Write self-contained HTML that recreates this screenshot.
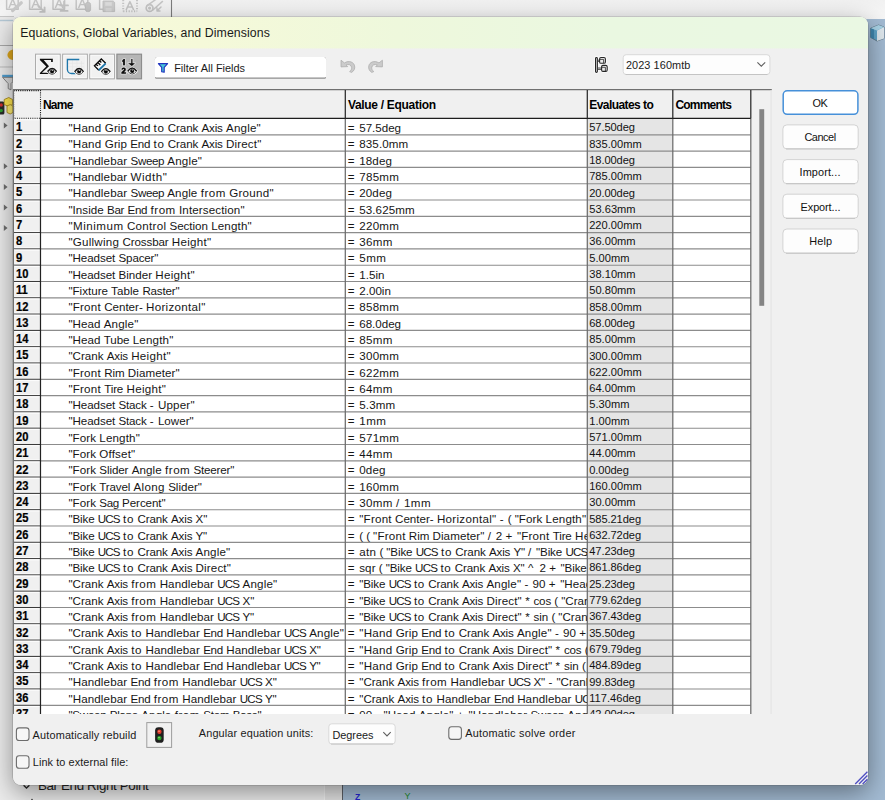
<!DOCTYPE html>
<html><head><meta charset="utf-8"><title>Equations, Global Variables, and Dimensions</title>
<style>
*{box-sizing:border-box;margin:0;padding:0}
html,body{width:885px;height:800px;overflow:hidden;background:#e6e6e6}
body{position:relative;font-family:"Liberation Sans",sans-serif;font-size:12px;color:#161616}
.abs{position:absolute}
i{font-style:normal}
.t{position:absolute;white-space:nowrap;color:#161616}
.clip{position:absolute;overflow:hidden}
/* ---------- backdrop (application window behind the dialog) ---------- */
#top{left:0;top:0;width:885px;height:19px;background:linear-gradient(#f1f1f1 0,#f5f5f5 10px,#f7f7f7 19px)}
#lpanel{left:0;top:17px;width:342px;height:783px;background:#ececec}
#lscroll{left:324px;top:700px;width:18px;height:100px;background:#e3e3e3;border-left:1px solid #f4f4f4}
#view{left:342px;top:19px;width:543px;height:781px;background:#a3bbd3;border-left:1px solid #5b5f66}
/* ---------- dialog ---------- */
#dlg{left:13px;top:17px;width:855px;height:768px;background:#f0f0f0;border-radius:8px;overflow:hidden}
#shadow{left:13px;top:17px;width:855px;height:768px;border-radius:8px;box-shadow:0 7px 26px rgba(0,0,0,.42),0 0 0 .6px rgba(100,100,100,.35)}
#title{left:0;top:0;width:855px;height:32px;background:linear-gradient(rgba(240,240,240,0) 0,rgba(240,240,240,0) 31px,rgba(240,240,240,.55) 31px),linear-gradient(90deg,#f8fad9 0,#f5f9d9 22%,#eef8dc 45%,#eaf8e1 70%,#eaf8e3 100%)}
#filter{left:155px;top:57px;width:171px;height:21.6px;background:#fff;border-radius:2.5px;box-shadow:0 1.2px 0 #8f8f8f}
.combo{position:absolute;background:#fdfdfd;border:1px solid #d9d9d9;border-bottom-color:#c6c6c6;border-radius:3px}
.btn{position:absolute;left:782.6px;width:75.8px;height:24.7px;background:#fdfdfd;border:1px solid #d4d4d4;border-bottom-color:#c8c8c8;border-radius:4.5px}
.btn.ok{border:1.6px solid #4791da;background:#fff}
.cb{position:absolute;width:13.4px;height:13.4px;border:1.1px solid #6e6e6e;border-radius:3px;background:#f5f5f5}
#tbclip{left:13px;top:89px;width:759px;height:625px;overflow:hidden}
#tbin{left:-13px;top:-89px;width:885px;height:800px}
</style></head><body>

<div id="top" class="abs"></div>
<div id="lpanel" class="abs"></div><div id="lscroll" class="abs"></div>
<div id="view" class="abs"></div>

<!-- backdrop details -->
<svg class="abs" style="left:0;top:0" width="885" height="800" viewBox="0 0 885 800">
  <!-- faint disabled toolbar icons at the top -->
  <g fill="none" stroke="#c6c6c6" stroke-width="1.45" stroke-linejoin="round" stroke-linecap="round">
    <path d="M6.6 -1V9.2H18.2V-1M29.6 -1V9.2H41.2V-1M53 -1V9.2H64.6V-1M76.2 -1V9.2H87.8V-1M99.6 -1V9.2H103"/>
    <path d="M9.2 7.6L12.7 -1L16.2 7.6M10.6 4.6H14.799999999999999M32.2 7.6L35.7 -1L39.2 7.6M33.6 4.6H37.8M55.6 7.6L59.1 -1L62.6 7.6M57 4.6H61.2M78.8 7.6L82.3 -1L85.8 7.6M80.2 4.6H84.4M126.3 9.6L129.9 1.6L133.5 9.6M127.6 7H132.2"/>
    <path d="M21.3 2.8L12.6 10.6" stroke-width="3.2" stroke="#cbcbcb"/>
    <path d="M38.2 5.8L43.6 11M44.6 7.4V11.9H40.2"  stroke-width="1.9"/>
    <path d="M60.2 5.4H68M64.1 1.6V9.2M60.6 10.9H67.6" stroke-width="1.9"/>
    <path d="M123.2 0V11.2M137 0V11.2M123.2 11.2H137" stroke-dasharray="1.2 1.5" stroke-width="2" stroke-linecap="butt"/>
    <circle cx="149.6" cy="8" r="3.4" stroke-width="1.7"/><circle cx="149.6" cy="8" r=".9" fill="#c6c6c6"/>
    <path d="M147 5.6L156.5 -1M152.6 10.2L162.5 1.4M161 7L157.2 10.8M157 8V11H160"/>
  </g>
  <rect x="85.4" y="2.4" width="5.2" height="9.2" rx="2.2" fill="#c8c8c8" stroke="#bdbdbd" stroke-width=".8"/>
  <path d="M103 1H113.2L114.6 2.4V11.6H103Z" fill="#cdcdcd" stroke="#bfbfbf" stroke-width=".9"/>
  <rect x="105.2" y="2.2" width="6.6" height="3.6" fill="#dedede"/><rect x="105.6" y="8" width="6" height="3.4" fill="#d9d9d9"/>
  <line x1="171.5" y1="0" x2="171.5" y2="17" stroke="#7d7d7d" stroke-width="1.1"/>
  <line x1="0" y1="16.5" x2="14" y2="16.5" stroke="#c9c9c9" stroke-width="1"/>
  <!-- left strip -->
  <line x1="0" y1="20.5" x2="13" y2="20.5" stroke="#b5c9d6" stroke-width="1.4"/>
  <line x1="0" y1="45.5" x2="13" y2="45.5" stroke="#a9a9a9" stroke-width="1"/>
  <line x1="0" y1="67" x2="13" y2="67" stroke="#bdbdbd" stroke-width="1"/>
  <path d="M13 49.5C9.5 50 7.5 52.5 7.4 55C7.5 57.5 9.5 59.6 13 60Z" fill="#e0a81c"/>
  <path d="M2.2 74.8H13V77H2.2Z" fill="#4f9ed0"/><path d="M2.6 77.4L8.2 83.6V88.6L11 89.8V83.6L13 81.5V77.4Z" fill="#d9d9d9" stroke="#7a7a7a" stroke-width=".9"/>
  <rect x="-1" y="101.5" width="5.4" height="13" rx="1.6" fill="#2a2a2a"/><circle cx="1.2" cy="105" r="1.7" fill="#d03030"/><circle cx="1.2" cy="110.6" r="1.7" fill="#30a030"/>
  <path d="M4.2 99.5L8.8 97.5L12.6 99.5V104.5L8.8 106.5L4.2 104.5Z" fill="#ffe650" stroke="#a08014" stroke-width=".8"/>
  <path d="M7 106L10.2 104.6L13 106V112.5L10.2 114L7 112.5Z" fill="#ffee70" stroke="#a08014" stroke-width=".8"/>
  <g fill="#6f6f6f"><path d="M3.8 122.6L7.6 125.6L3.8 128.6Z"/><path d="M3.8 163.3L7.6 166.3L3.8 169.3Z"/><path d="M3.8 184L7.6 187L3.8 190Z"/><path d="M3.8 204.5L7.6 207.5L3.8 210.5Z"/><path d="M3.8 225L7.6 228L3.8 231Z"/></g>
  <!-- right strip cube -->
  <path d="M870.6 28.2L878.5 25L884 27V38.5L877 41L870.6 37.4Z" fill="#5fa3c6" stroke="#5d6e7c" stroke-width=".8"/>
  <path d="M877 30.5L884 27V38.5L877 41Z" fill="#dfe8ee"/><path d="M870.6 28.2L878.5 25L884 27L877 30.5Z" fill="#a9d3e6"/>
  <path d="M870.6 28.2L874 29.6V39.3L870.6 37.4Z" fill="#3f86ad"/>
  <!-- bottom: tree text peeking out + axis labels -->
  <path d="M23.6 785.2L26.5 788L29.4 785.2" fill="none" stroke="#2a2a2a" stroke-width="1.5"/>
  <path d="M31.2 800L32 798.9L32.8 800" fill="none" stroke="#555" stroke-width=".9"/>
</svg>
<span class="t" style="left:38px;top:776.6px;font-size:13.4px;line-height:18px;letter-spacing:-.38px;color:#1c1c1c">Bar End Right Point</span>
<span class="t" style="left:355px;top:791.8px;font-size:8.6px;line-height:11px;font-weight:bold;color:#2424d0">Z</span>
<span class="t" style="left:404.6px;top:789.6px;font-size:9px;line-height:12px;color:#1f8b2e">Y</span>

<!-- dialog -->
<div id="shadow" class="abs"></div>
<div id="dlg" class="abs">
  <div id="title" class="abs"></div>
</div>

<svg class="abs" style="left:0;top:0" width="885" height="800" viewBox="0 0 885 800">
  <!-- filter field -->
  <path d="M155 59.2Q155 57.1 157.1 57.1H323.9Q326 57.1 326 59.2V77.4Q326 78.7 324.6 78.7H156.4Q155 78.7 155 77.4Z" fill="#8d8d8d"/>
  <path d="M155 59.2Q155 57.1 157.1 57.1H323.9Q326 57.1 326 59.2V76.3Q326 77.5 324.6 77.5H156.4Q155 77.5 155 76.3Z" fill="#fff"/>
  <!-- combo boxes -->
  <rect x="623.2" y="54.7" width="146.7" height="19.8" rx="3" fill="#fdfdfd" stroke="#d9d9d9" stroke-width="1"/>
  <path d="M625.5 74.5H767.5" stroke="#c4c4c4" stroke-width="1"/>
  <rect x="328.8" y="723.8" width="66.4" height="20.2" rx="3" fill="#fdfdfd" stroke="#d9d9d9" stroke-width="1"/>
  <path d="M331 744H393" stroke="#c4c4c4" stroke-width="1"/>
</svg>

<!-- table -->
<div id="tbclip" class="abs"><div id="tbin" class="abs">
<svg class="abs" style="left:0;top:0" width="885" height="800" viewBox="0 0 885 800"><rect x="13" y="89" width="737.8" height="29.5" fill="#f0f0f0"/>
<rect x="13" y="118.5" width="27.5" height="595.5" fill="#f0f0f0"/>
<rect x="40.5" y="118.5" width="710.3" height="595.5" fill="#fff"/>
<rect x="587.3" y="118.5" width="85.5" height="595.5" fill="#e5e5e5"/>
<rect x="14.2" y="119.10" width="25.7" height="1.2" fill="#fcfcfc"/>
<rect x="14.2" y="133.20" width="25.7" height="1" fill="#f9f9f9"/>
<rect x="14.1" y="119.10" width="1" height="15.10" fill="#fafafa"/>
<line x1="13" x2="40.5" y1="134.80" y2="134.80" stroke="#3a3a3a" stroke-width="1.1"/>
<line x1="40.5" x2="750.8" y1="134.80" y2="134.80" stroke="#8c8c8c" stroke-width="1.15"/>
<rect x="14.2" y="135.40" width="25.7" height="1.2" fill="#fcfcfc"/>
<rect x="14.2" y="149.50" width="25.7" height="1" fill="#f9f9f9"/>
<rect x="14.1" y="135.40" width="1" height="15.10" fill="#fafafa"/>
<line x1="13" x2="40.5" y1="151.10" y2="151.10" stroke="#3a3a3a" stroke-width="1.1"/>
<line x1="40.5" x2="750.8" y1="151.10" y2="151.10" stroke="#8c8c8c" stroke-width="1.15"/>
<rect x="14.2" y="151.70" width="25.7" height="1.2" fill="#fcfcfc"/>
<rect x="14.2" y="165.80" width="25.7" height="1" fill="#f9f9f9"/>
<rect x="14.1" y="151.70" width="1" height="15.10" fill="#fafafa"/>
<line x1="13" x2="40.5" y1="167.40" y2="167.40" stroke="#3a3a3a" stroke-width="1.1"/>
<line x1="40.5" x2="750.8" y1="167.40" y2="167.40" stroke="#8c8c8c" stroke-width="1.15"/>
<rect x="14.2" y="168.00" width="25.7" height="1.2" fill="#fcfcfc"/>
<rect x="14.2" y="182.10" width="25.7" height="1" fill="#f9f9f9"/>
<rect x="14.1" y="168.00" width="1" height="15.10" fill="#fafafa"/>
<line x1="13" x2="40.5" y1="183.70" y2="183.70" stroke="#3a3a3a" stroke-width="1.1"/>
<line x1="40.5" x2="750.8" y1="183.70" y2="183.70" stroke="#8c8c8c" stroke-width="1.15"/>
<rect x="14.2" y="184.30" width="25.7" height="1.2" fill="#fcfcfc"/>
<rect x="14.2" y="198.40" width="25.7" height="1" fill="#f9f9f9"/>
<rect x="14.1" y="184.30" width="1" height="15.10" fill="#fafafa"/>
<line x1="13" x2="40.5" y1="200.00" y2="200.00" stroke="#3a3a3a" stroke-width="1.1"/>
<line x1="40.5" x2="750.8" y1="200.00" y2="200.00" stroke="#8c8c8c" stroke-width="1.15"/>
<rect x="14.2" y="200.60" width="25.7" height="1.2" fill="#fcfcfc"/>
<rect x="14.2" y="214.70" width="25.7" height="1" fill="#f9f9f9"/>
<rect x="14.1" y="200.60" width="1" height="15.10" fill="#fafafa"/>
<line x1="13" x2="40.5" y1="216.30" y2="216.30" stroke="#3a3a3a" stroke-width="1.1"/>
<line x1="40.5" x2="750.8" y1="216.30" y2="216.30" stroke="#8c8c8c" stroke-width="1.15"/>
<rect x="14.2" y="216.90" width="25.7" height="1.2" fill="#fcfcfc"/>
<rect x="14.2" y="231.00" width="25.7" height="1" fill="#f9f9f9"/>
<rect x="14.1" y="216.90" width="1" height="15.10" fill="#fafafa"/>
<line x1="13" x2="40.5" y1="232.60" y2="232.60" stroke="#3a3a3a" stroke-width="1.1"/>
<line x1="40.5" x2="750.8" y1="232.60" y2="232.60" stroke="#8c8c8c" stroke-width="1.15"/>
<rect x="14.2" y="233.20" width="25.7" height="1.2" fill="#fcfcfc"/>
<rect x="14.2" y="247.30" width="25.7" height="1" fill="#f9f9f9"/>
<rect x="14.1" y="233.20" width="1" height="15.10" fill="#fafafa"/>
<line x1="13" x2="40.5" y1="248.90" y2="248.90" stroke="#3a3a3a" stroke-width="1.1"/>
<line x1="40.5" x2="750.8" y1="248.90" y2="248.90" stroke="#8c8c8c" stroke-width="1.15"/>
<rect x="14.2" y="249.50" width="25.7" height="1.2" fill="#fcfcfc"/>
<rect x="14.2" y="263.60" width="25.7" height="1" fill="#f9f9f9"/>
<rect x="14.1" y="249.50" width="1" height="15.10" fill="#fafafa"/>
<line x1="13" x2="40.5" y1="265.20" y2="265.20" stroke="#3a3a3a" stroke-width="1.1"/>
<line x1="40.5" x2="750.8" y1="265.20" y2="265.20" stroke="#8c8c8c" stroke-width="1.15"/>
<rect x="14.2" y="265.80" width="25.7" height="1.2" fill="#fcfcfc"/>
<rect x="14.2" y="279.90" width="25.7" height="1" fill="#f9f9f9"/>
<rect x="14.1" y="265.80" width="1" height="15.10" fill="#fafafa"/>
<line x1="13" x2="40.5" y1="281.50" y2="281.50" stroke="#3a3a3a" stroke-width="1.1"/>
<line x1="40.5" x2="750.8" y1="281.50" y2="281.50" stroke="#8c8c8c" stroke-width="1.15"/>
<rect x="14.2" y="282.10" width="25.7" height="1.2" fill="#fcfcfc"/>
<rect x="14.2" y="296.20" width="25.7" height="1" fill="#f9f9f9"/>
<rect x="14.1" y="282.10" width="1" height="15.10" fill="#fafafa"/>
<line x1="13" x2="40.5" y1="297.80" y2="297.80" stroke="#3a3a3a" stroke-width="1.1"/>
<line x1="40.5" x2="750.8" y1="297.80" y2="297.80" stroke="#8c8c8c" stroke-width="1.15"/>
<rect x="14.2" y="298.40" width="25.7" height="1.2" fill="#fcfcfc"/>
<rect x="14.2" y="312.50" width="25.7" height="1" fill="#f9f9f9"/>
<rect x="14.1" y="298.40" width="1" height="15.10" fill="#fafafa"/>
<line x1="13" x2="40.5" y1="314.10" y2="314.10" stroke="#3a3a3a" stroke-width="1.1"/>
<line x1="40.5" x2="750.8" y1="314.10" y2="314.10" stroke="#8c8c8c" stroke-width="1.15"/>
<rect x="14.2" y="314.70" width="25.7" height="1.2" fill="#fcfcfc"/>
<rect x="14.2" y="328.80" width="25.7" height="1" fill="#f9f9f9"/>
<rect x="14.1" y="314.70" width="1" height="15.10" fill="#fafafa"/>
<line x1="13" x2="40.5" y1="330.40" y2="330.40" stroke="#3a3a3a" stroke-width="1.1"/>
<line x1="40.5" x2="750.8" y1="330.40" y2="330.40" stroke="#8c8c8c" stroke-width="1.15"/>
<rect x="14.2" y="331.00" width="25.7" height="1.2" fill="#fcfcfc"/>
<rect x="14.2" y="345.10" width="25.7" height="1" fill="#f9f9f9"/>
<rect x="14.1" y="331.00" width="1" height="15.10" fill="#fafafa"/>
<line x1="13" x2="40.5" y1="346.70" y2="346.70" stroke="#3a3a3a" stroke-width="1.1"/>
<line x1="40.5" x2="750.8" y1="346.70" y2="346.70" stroke="#8c8c8c" stroke-width="1.15"/>
<rect x="14.2" y="347.30" width="25.7" height="1.2" fill="#fcfcfc"/>
<rect x="14.2" y="361.40" width="25.7" height="1" fill="#f9f9f9"/>
<rect x="14.1" y="347.30" width="1" height="15.10" fill="#fafafa"/>
<line x1="13" x2="40.5" y1="363.00" y2="363.00" stroke="#3a3a3a" stroke-width="1.1"/>
<line x1="40.5" x2="750.8" y1="363.00" y2="363.00" stroke="#8c8c8c" stroke-width="1.15"/>
<rect x="14.2" y="363.60" width="25.7" height="1.2" fill="#fcfcfc"/>
<rect x="14.2" y="377.70" width="25.7" height="1" fill="#f9f9f9"/>
<rect x="14.1" y="363.60" width="1" height="15.10" fill="#fafafa"/>
<line x1="13" x2="40.5" y1="379.30" y2="379.30" stroke="#3a3a3a" stroke-width="1.1"/>
<line x1="40.5" x2="750.8" y1="379.30" y2="379.30" stroke="#8c8c8c" stroke-width="1.15"/>
<rect x="14.2" y="379.90" width="25.7" height="1.2" fill="#fcfcfc"/>
<rect x="14.2" y="394.00" width="25.7" height="1" fill="#f9f9f9"/>
<rect x="14.1" y="379.90" width="1" height="15.10" fill="#fafafa"/>
<line x1="13" x2="40.5" y1="395.60" y2="395.60" stroke="#3a3a3a" stroke-width="1.1"/>
<line x1="40.5" x2="750.8" y1="395.60" y2="395.60" stroke="#8c8c8c" stroke-width="1.15"/>
<rect x="14.2" y="396.20" width="25.7" height="1.2" fill="#fcfcfc"/>
<rect x="14.2" y="410.30" width="25.7" height="1" fill="#f9f9f9"/>
<rect x="14.1" y="396.20" width="1" height="15.10" fill="#fafafa"/>
<line x1="13" x2="40.5" y1="411.90" y2="411.90" stroke="#3a3a3a" stroke-width="1.1"/>
<line x1="40.5" x2="750.8" y1="411.90" y2="411.90" stroke="#8c8c8c" stroke-width="1.15"/>
<rect x="14.2" y="412.50" width="25.7" height="1.2" fill="#fcfcfc"/>
<rect x="14.2" y="426.60" width="25.7" height="1" fill="#f9f9f9"/>
<rect x="14.1" y="412.50" width="1" height="15.10" fill="#fafafa"/>
<line x1="13" x2="40.5" y1="428.20" y2="428.20" stroke="#3a3a3a" stroke-width="1.1"/>
<line x1="40.5" x2="750.8" y1="428.20" y2="428.20" stroke="#8c8c8c" stroke-width="1.15"/>
<rect x="14.2" y="428.80" width="25.7" height="1.2" fill="#fcfcfc"/>
<rect x="14.2" y="442.90" width="25.7" height="1" fill="#f9f9f9"/>
<rect x="14.1" y="428.80" width="1" height="15.10" fill="#fafafa"/>
<line x1="13" x2="40.5" y1="444.50" y2="444.50" stroke="#3a3a3a" stroke-width="1.1"/>
<line x1="40.5" x2="750.8" y1="444.50" y2="444.50" stroke="#8c8c8c" stroke-width="1.15"/>
<rect x="14.2" y="445.10" width="25.7" height="1.2" fill="#fcfcfc"/>
<rect x="14.2" y="459.20" width="25.7" height="1" fill="#f9f9f9"/>
<rect x="14.1" y="445.10" width="1" height="15.10" fill="#fafafa"/>
<line x1="13" x2="40.5" y1="460.80" y2="460.80" stroke="#3a3a3a" stroke-width="1.1"/>
<line x1="40.5" x2="750.8" y1="460.80" y2="460.80" stroke="#8c8c8c" stroke-width="1.15"/>
<rect x="14.2" y="461.40" width="25.7" height="1.2" fill="#fcfcfc"/>
<rect x="14.2" y="475.50" width="25.7" height="1" fill="#f9f9f9"/>
<rect x="14.1" y="461.40" width="1" height="15.10" fill="#fafafa"/>
<line x1="13" x2="40.5" y1="477.10" y2="477.10" stroke="#3a3a3a" stroke-width="1.1"/>
<line x1="40.5" x2="750.8" y1="477.10" y2="477.10" stroke="#8c8c8c" stroke-width="1.15"/>
<rect x="14.2" y="477.70" width="25.7" height="1.2" fill="#fcfcfc"/>
<rect x="14.2" y="491.80" width="25.7" height="1" fill="#f9f9f9"/>
<rect x="14.1" y="477.70" width="1" height="15.10" fill="#fafafa"/>
<line x1="13" x2="40.5" y1="493.40" y2="493.40" stroke="#3a3a3a" stroke-width="1.1"/>
<line x1="40.5" x2="750.8" y1="493.40" y2="493.40" stroke="#8c8c8c" stroke-width="1.15"/>
<rect x="14.2" y="494.00" width="25.7" height="1.2" fill="#fcfcfc"/>
<rect x="14.2" y="508.10" width="25.7" height="1" fill="#f9f9f9"/>
<rect x="14.1" y="494.00" width="1" height="15.10" fill="#fafafa"/>
<line x1="13" x2="40.5" y1="509.70" y2="509.70" stroke="#3a3a3a" stroke-width="1.1"/>
<line x1="40.5" x2="750.8" y1="509.70" y2="509.70" stroke="#8c8c8c" stroke-width="1.15"/>
<rect x="14.2" y="510.30" width="25.7" height="1.2" fill="#fcfcfc"/>
<rect x="14.2" y="524.40" width="25.7" height="1" fill="#f9f9f9"/>
<rect x="14.1" y="510.30" width="1" height="15.10" fill="#fafafa"/>
<line x1="13" x2="40.5" y1="526.00" y2="526.00" stroke="#3a3a3a" stroke-width="1.1"/>
<line x1="40.5" x2="750.8" y1="526.00" y2="526.00" stroke="#8c8c8c" stroke-width="1.15"/>
<rect x="14.2" y="526.60" width="25.7" height="1.2" fill="#fcfcfc"/>
<rect x="14.2" y="540.70" width="25.7" height="1" fill="#f9f9f9"/>
<rect x="14.1" y="526.60" width="1" height="15.10" fill="#fafafa"/>
<line x1="13" x2="40.5" y1="542.30" y2="542.30" stroke="#3a3a3a" stroke-width="1.1"/>
<line x1="40.5" x2="750.8" y1="542.30" y2="542.30" stroke="#8c8c8c" stroke-width="1.15"/>
<rect x="14.2" y="542.90" width="25.7" height="1.2" fill="#fcfcfc"/>
<rect x="14.2" y="557.00" width="25.7" height="1" fill="#f9f9f9"/>
<rect x="14.1" y="542.90" width="1" height="15.10" fill="#fafafa"/>
<line x1="13" x2="40.5" y1="558.60" y2="558.60" stroke="#3a3a3a" stroke-width="1.1"/>
<line x1="40.5" x2="750.8" y1="558.60" y2="558.60" stroke="#8c8c8c" stroke-width="1.15"/>
<rect x="14.2" y="559.20" width="25.7" height="1.2" fill="#fcfcfc"/>
<rect x="14.2" y="573.30" width="25.7" height="1" fill="#f9f9f9"/>
<rect x="14.1" y="559.20" width="1" height="15.10" fill="#fafafa"/>
<line x1="13" x2="40.5" y1="574.90" y2="574.90" stroke="#3a3a3a" stroke-width="1.1"/>
<line x1="40.5" x2="750.8" y1="574.90" y2="574.90" stroke="#8c8c8c" stroke-width="1.15"/>
<rect x="14.2" y="575.50" width="25.7" height="1.2" fill="#fcfcfc"/>
<rect x="14.2" y="589.60" width="25.7" height="1" fill="#f9f9f9"/>
<rect x="14.1" y="575.50" width="1" height="15.10" fill="#fafafa"/>
<line x1="13" x2="40.5" y1="591.20" y2="591.20" stroke="#3a3a3a" stroke-width="1.1"/>
<line x1="40.5" x2="750.8" y1="591.20" y2="591.20" stroke="#8c8c8c" stroke-width="1.15"/>
<rect x="14.2" y="591.80" width="25.7" height="1.2" fill="#fcfcfc"/>
<rect x="14.2" y="605.90" width="25.7" height="1" fill="#f9f9f9"/>
<rect x="14.1" y="591.80" width="1" height="15.10" fill="#fafafa"/>
<line x1="13" x2="40.5" y1="607.50" y2="607.50" stroke="#3a3a3a" stroke-width="1.1"/>
<line x1="40.5" x2="750.8" y1="607.50" y2="607.50" stroke="#8c8c8c" stroke-width="1.15"/>
<rect x="14.2" y="608.10" width="25.7" height="1.2" fill="#fcfcfc"/>
<rect x="14.2" y="622.20" width="25.7" height="1" fill="#f9f9f9"/>
<rect x="14.1" y="608.10" width="1" height="15.10" fill="#fafafa"/>
<line x1="13" x2="40.5" y1="623.80" y2="623.80" stroke="#3a3a3a" stroke-width="1.1"/>
<line x1="40.5" x2="750.8" y1="623.80" y2="623.80" stroke="#8c8c8c" stroke-width="1.15"/>
<rect x="14.2" y="624.40" width="25.7" height="1.2" fill="#fcfcfc"/>
<rect x="14.2" y="638.50" width="25.7" height="1" fill="#f9f9f9"/>
<rect x="14.1" y="624.40" width="1" height="15.10" fill="#fafafa"/>
<line x1="13" x2="40.5" y1="640.10" y2="640.10" stroke="#3a3a3a" stroke-width="1.1"/>
<line x1="40.5" x2="750.8" y1="640.10" y2="640.10" stroke="#8c8c8c" stroke-width="1.15"/>
<rect x="14.2" y="640.70" width="25.7" height="1.2" fill="#fcfcfc"/>
<rect x="14.2" y="654.80" width="25.7" height="1" fill="#f9f9f9"/>
<rect x="14.1" y="640.70" width="1" height="15.10" fill="#fafafa"/>
<line x1="13" x2="40.5" y1="656.40" y2="656.40" stroke="#3a3a3a" stroke-width="1.1"/>
<line x1="40.5" x2="750.8" y1="656.40" y2="656.40" stroke="#8c8c8c" stroke-width="1.15"/>
<rect x="14.2" y="657.00" width="25.7" height="1.2" fill="#fcfcfc"/>
<rect x="14.2" y="671.10" width="25.7" height="1" fill="#f9f9f9"/>
<rect x="14.1" y="657.00" width="1" height="15.10" fill="#fafafa"/>
<line x1="13" x2="40.5" y1="672.70" y2="672.70" stroke="#3a3a3a" stroke-width="1.1"/>
<line x1="40.5" x2="750.8" y1="672.70" y2="672.70" stroke="#8c8c8c" stroke-width="1.15"/>
<rect x="14.2" y="673.30" width="25.7" height="1.2" fill="#fcfcfc"/>
<rect x="14.2" y="687.40" width="25.7" height="1" fill="#f9f9f9"/>
<rect x="14.1" y="673.30" width="1" height="15.10" fill="#fafafa"/>
<line x1="13" x2="40.5" y1="689.00" y2="689.00" stroke="#3a3a3a" stroke-width="1.1"/>
<line x1="40.5" x2="750.8" y1="689.00" y2="689.00" stroke="#8c8c8c" stroke-width="1.15"/>
<rect x="14.2" y="689.60" width="25.7" height="1.2" fill="#fcfcfc"/>
<rect x="14.2" y="703.70" width="25.7" height="1" fill="#f9f9f9"/>
<rect x="14.1" y="689.60" width="1" height="15.10" fill="#fafafa"/>
<line x1="13" x2="40.5" y1="705.30" y2="705.30" stroke="#3a3a3a" stroke-width="1.1"/>
<line x1="40.5" x2="750.8" y1="705.30" y2="705.30" stroke="#8c8c8c" stroke-width="1.15"/>
<rect x="14.2" y="705.90" width="25.7" height="1.2" fill="#fcfcfc"/>
<rect x="14.2" y="720.00" width="25.7" height="1" fill="#f9f9f9"/>
<rect x="14.1" y="705.90" width="1" height="15.10" fill="#fafafa"/>
<line x1="13" x2="40.5" y1="721.60" y2="721.60" stroke="#3a3a3a" stroke-width="1.1"/>
<line x1="40.5" x2="750.8" y1="721.60" y2="721.60" stroke="#8c8c8c" stroke-width="1.15"/>
<line x1="40.5" x2="40.5" y1="118.5" y2="714.0" stroke="#222" stroke-width="1.2"/>
<line x1="345.3" x2="345.3" y1="118.5" y2="714.0" stroke="#6c6c6c" stroke-width="1.25"/>
<line x1="587.3" x2="587.3" y1="118.5" y2="714.0" stroke="#6c6c6c" stroke-width="1.25"/>
<line x1="672.8" x2="672.8" y1="118.5" y2="714.0" stroke="#6c6c6c" stroke-width="1.25"/>
<line x1="750.8" x2="750.8" y1="118.5" y2="714.0" stroke="#6c6c6c" stroke-width="1.25"/>
<line x1="13" x2="771.8" y1="89.6" y2="89.6" stroke="#707070" stroke-width="1.2"/>
<line x1="40.5" x2="750.8" y1="118.3" y2="118.3" stroke="#1e1e1e" stroke-width="1.3"/>
<line x1="345.3" x2="345.3" y1="90" y2="118.5" stroke="#2a2a2a" stroke-width="1.25"/>
<line x1="587.3" x2="587.3" y1="90" y2="118.5" stroke="#2a2a2a" stroke-width="1.25"/>
<line x1="672.8" x2="672.8" y1="90" y2="118.5" stroke="#2a2a2a" stroke-width="1.25"/>
<line x1="750.8" x2="750.8" y1="90" y2="118.5" stroke="#2a2a2a" stroke-width="1.25"/>
<rect x="13.6" y="90.6" width="26.9" height="27.6" fill="none" stroke="#222" stroke-width="1.1" stroke-dasharray="1.1 1.1"/>
<line x1="13.5" x2="13.5" y1="89" y2="714.0" stroke="#6e6e6e" stroke-width="1.1"/></svg>
<span class="t " style="left:42.90px;top:97.14px;font-size:12px;line-height:16px;letter-spacing:-0.700px;font-weight:bold;color:#000;">Name</span>
<span class="t " style="left:347.90px;top:97.14px;font-size:12px;line-height:16px;letter-spacing:-0.300px;font-weight:bold;color:#000;">Value / Equation</span>
<span class="t " style="left:589.30px;top:97.14px;font-size:12px;line-height:16px;letter-spacing:-0.571px;font-weight:bold;color:#000;">Evaluates to</span>
<span class="t " style="left:675.40px;top:97.14px;font-size:12px;line-height:16px;letter-spacing:-0.777px;font-weight:bold;color:#000;">Comments</span>
<span class="t" style="left:16.30px;top:119.20px;font-size:12.4px;line-height:16px;font-weight:bold;color:#000;-webkit-text-stroke:.22px #000;transform:scaleX(0.900);transform-origin:0 0">1</span>
<span class="t " style="left:68.40px;top:120.08px;font-size:11.6px;line-height:15px"><i style="letter-spacing:0.25px">"Hand</i><i style="letter-spacing:0.06px"> </i><i style="letter-spacing:0.10px">Grip</i><i style="letter-spacing:0.06px"> </i><i style="letter-spacing:-0.26px">End</i><i style="letter-spacing:0.06px"> </i><i style="letter-spacing:0.70px">to</i><i style="letter-spacing:0.06px"> </i><i style="letter-spacing:-0.11px">Crank</i><i style="letter-spacing:0.06px"> </i><i style="letter-spacing:-0.18px">Axis</i><i style="letter-spacing:0.06px"> </i><i style="letter-spacing:0.17px">Angle"</i></span>
<div class="clip" style="left:40.5px;width:546.2px;top:119.00px;height:16.3px"><span class="t " style="left:307.30px;top:1.08px;font-size:11.6px;line-height:15px"><i style="letter-spacing:1.41px">=</i><i style="letter-spacing:0.06px"> </i><i style="letter-spacing:-0.02px">57.5deg</i></span></div>
<span class="t " style="left:589.20px;top:120.35px;font-size:11.1px;line-height:14px;letter-spacing:-0.073px;color:#121212;">57.50deg</span>
<span class="t" style="left:16.30px;top:135.50px;font-size:12.4px;line-height:16px;font-weight:bold;color:#000;-webkit-text-stroke:.22px #000;transform:scaleX(0.900);transform-origin:0 0">2</span>
<span class="t " style="left:68.40px;top:136.38px;font-size:11.6px;line-height:15px"><i style="letter-spacing:0.25px">"Hand</i><i style="letter-spacing:0.06px"> </i><i style="letter-spacing:0.10px">Grip</i><i style="letter-spacing:0.06px"> </i><i style="letter-spacing:-0.26px">End</i><i style="letter-spacing:0.06px"> </i><i style="letter-spacing:0.70px">to</i><i style="letter-spacing:0.06px"> </i><i style="letter-spacing:-0.11px">Crank</i><i style="letter-spacing:0.06px"> </i><i style="letter-spacing:-0.18px">Axis</i><i style="letter-spacing:0.06px"> </i><i style="letter-spacing:0.15px">Direct"</i></span>
<div class="clip" style="left:40.5px;width:546.2px;top:135.30px;height:16.3px"><span class="t " style="left:307.30px;top:1.08px;font-size:11.6px;line-height:15px"><i style="letter-spacing:1.41px">=</i><i style="letter-spacing:0.06px"> </i><i style="letter-spacing:0.09px">835.0mm</i></span></div>
<span class="t " style="left:589.20px;top:136.65px;font-size:11.1px;line-height:14px;letter-spacing:0.017px;color:#121212;">835.00mm</span>
<span class="t" style="left:16.30px;top:151.80px;font-size:12.4px;line-height:16px;font-weight:bold;color:#000;-webkit-text-stroke:.22px #000;transform:scaleX(0.900);transform-origin:0 0">3</span>
<span class="t " style="left:68.40px;top:152.68px;font-size:11.6px;line-height:15px"><i style="letter-spacing:0.13px">"Handlebar</i><i style="letter-spacing:0.06px"> </i><i style="letter-spacing:-0.41px">Sweep</i><i style="letter-spacing:0.06px"> </i><i style="letter-spacing:0.17px">Angle"</i></span>
<div class="clip" style="left:40.5px;width:546.2px;top:151.60px;height:16.3px"><span class="t " style="left:307.30px;top:1.08px;font-size:11.6px;line-height:15px"><i style="letter-spacing:1.41px">=</i><i style="letter-spacing:0.06px"> </i><i style="letter-spacing:0.09px">18deg</i></span></div>
<span class="t " style="left:589.20px;top:152.95px;font-size:11.1px;line-height:14px;letter-spacing:-0.073px;color:#121212;">18.00deg</span>
<span class="t" style="left:16.30px;top:168.10px;font-size:12.4px;line-height:16px;font-weight:bold;color:#000;-webkit-text-stroke:.22px #000;transform:scaleX(0.900);transform-origin:0 0">4</span>
<span class="t " style="left:68.40px;top:168.98px;font-size:11.6px;line-height:15px"><i style="letter-spacing:0.13px">"Handlebar</i><i style="letter-spacing:0.06px"> </i><i style="letter-spacing:0.48px">Width"</i></span>
<div class="clip" style="left:40.5px;width:546.2px;top:167.90px;height:16.3px"><span class="t " style="left:307.30px;top:1.08px;font-size:11.6px;line-height:15px"><i style="letter-spacing:1.41px">=</i><i style="letter-spacing:0.06px"> </i><i style="letter-spacing:0.25px">785mm</i></span></div>
<span class="t " style="left:589.20px;top:169.25px;font-size:11.1px;line-height:14px;letter-spacing:0.017px;color:#121212;">785.00mm</span>
<span class="t" style="left:16.30px;top:184.40px;font-size:12.4px;line-height:16px;font-weight:bold;color:#000;-webkit-text-stroke:.22px #000;transform:scaleX(0.900);transform-origin:0 0">5</span>
<span class="t " style="left:68.40px;top:185.28px;font-size:11.6px;line-height:15px"><i style="letter-spacing:0.13px">"Handlebar</i><i style="letter-spacing:0.06px"> </i><i style="letter-spacing:-0.41px">Sweep</i><i style="letter-spacing:0.06px"> </i><i style="letter-spacing:0.09px">Angle</i><i style="letter-spacing:0.06px"> </i><i style="letter-spacing:0.50px">from</i><i style="letter-spacing:0.06px"> </i><i style="letter-spacing:0.27px">Ground"</i></span>
<div class="clip" style="left:40.5px;width:546.2px;top:184.20px;height:16.3px"><span class="t " style="left:307.30px;top:1.08px;font-size:11.6px;line-height:15px"><i style="letter-spacing:1.41px">=</i><i style="letter-spacing:0.06px"> </i><i style="letter-spacing:0.09px">20deg</i></span></div>
<span class="t " style="left:589.20px;top:185.55px;font-size:11.1px;line-height:14px;letter-spacing:-0.073px;color:#121212;">20.00deg</span>
<span class="t" style="left:16.30px;top:200.70px;font-size:12.4px;line-height:16px;font-weight:bold;color:#000;-webkit-text-stroke:.22px #000;transform:scaleX(0.900);transform-origin:0 0">6</span>
<span class="t " style="left:68.40px;top:201.58px;font-size:11.6px;line-height:15px"><i style="letter-spacing:0.04px">"Inside</i><i style="letter-spacing:0.06px"> </i><i style="letter-spacing:-0.31px">Bar</i><i style="letter-spacing:0.06px"> </i><i style="letter-spacing:-0.26px">End</i><i style="letter-spacing:0.06px"> </i><i style="letter-spacing:0.50px">from</i><i style="letter-spacing:0.06px"> </i><i style="letter-spacing:0.12px">Intersection"</i></span>
<div class="clip" style="left:40.5px;width:546.2px;top:200.50px;height:16.3px"><span class="t " style="left:307.30px;top:1.08px;font-size:11.6px;line-height:15px"><i style="letter-spacing:1.41px">=</i><i style="letter-spacing:0.06px"> </i><i style="letter-spacing:0.08px">53.625mm</i></span></div>
<span class="t " style="left:589.20px;top:201.85px;font-size:11.1px;line-height:14px;letter-spacing:0.028px;color:#121212;">53.63mm</span>
<span class="t" style="left:16.30px;top:217.00px;font-size:12.4px;line-height:16px;font-weight:bold;color:#000;-webkit-text-stroke:.22px #000;transform:scaleX(0.900);transform-origin:0 0">7</span>
<span class="t " style="left:68.40px;top:217.88px;font-size:11.6px;line-height:15px"><i style="letter-spacing:0.52px">"Minimum</i><i style="letter-spacing:0.06px"> </i><i style="letter-spacing:0.27px">Control</i><i style="letter-spacing:0.06px"> </i><i style="letter-spacing:-0.05px">Section</i><i style="letter-spacing:0.06px"> </i><i style="letter-spacing:0.15px">Length"</i></span>
<div class="clip" style="left:40.5px;width:546.2px;top:216.80px;height:16.3px"><span class="t " style="left:307.30px;top:1.08px;font-size:11.6px;line-height:15px"><i style="letter-spacing:1.41px">=</i><i style="letter-spacing:0.06px"> </i><i style="letter-spacing:0.25px">220mm</i></span></div>
<span class="t " style="left:589.20px;top:218.15px;font-size:11.1px;line-height:14px;letter-spacing:0.017px;color:#121212;">220.00mm</span>
<span class="t" style="left:16.30px;top:233.30px;font-size:12.4px;line-height:16px;font-weight:bold;color:#000;-webkit-text-stroke:.22px #000;transform:scaleX(0.900);transform-origin:0 0">8</span>
<span class="t " style="left:68.40px;top:234.18px;font-size:11.6px;line-height:15px"><i style="letter-spacing:0.25px">"Gullwing</i><i style="letter-spacing:0.06px"> </i><i style="letter-spacing:-0.13px">Crossbar</i><i style="letter-spacing:0.06px"> </i><i style="letter-spacing:0.29px">Height"</i></span>
<div class="clip" style="left:40.5px;width:546.2px;top:233.10px;height:16.3px"><span class="t " style="left:307.30px;top:1.08px;font-size:11.6px;line-height:15px"><i style="letter-spacing:1.41px">=</i><i style="letter-spacing:0.06px"> </i><i style="letter-spacing:0.32px">36mm</i></span></div>
<span class="t " style="left:589.20px;top:234.45px;font-size:11.1px;line-height:14px;letter-spacing:0.028px;color:#121212;">36.00mm</span>
<span class="t" style="left:16.30px;top:249.60px;font-size:12.4px;line-height:16px;font-weight:bold;color:#000;-webkit-text-stroke:.22px #000;transform:scaleX(0.900);transform-origin:0 0">9</span>
<span class="t " style="left:68.40px;top:250.48px;font-size:11.6px;line-height:15px"><i style="letter-spacing:-0.05px">"Headset</i><i style="letter-spacing:0.06px"> </i><i style="letter-spacing:-0.19px">Spacer"</i></span>
<div class="clip" style="left:40.5px;width:546.2px;top:249.40px;height:16.3px"><span class="t " style="left:307.30px;top:1.08px;font-size:11.6px;line-height:15px"><i style="letter-spacing:1.41px">=</i><i style="letter-spacing:0.06px"> </i><i style="letter-spacing:0.42px">5mm</i></span></div>
<span class="t " style="left:589.20px;top:250.75px;font-size:11.1px;line-height:14px;letter-spacing:0.041px;color:#121212;">5.00mm</span>
<span class="t" style="left:16.30px;top:265.90px;font-size:12.4px;line-height:16px;font-weight:bold;color:#000;-webkit-text-stroke:.22px #000;transform:scaleX(0.900);transform-origin:0 0">10</span>
<span class="t " style="left:68.40px;top:266.78px;font-size:11.6px;line-height:15px"><i style="letter-spacing:-0.05px">"Headset</i><i style="letter-spacing:0.06px"> </i><i style="letter-spacing:-0.01px">Binder</i><i style="letter-spacing:0.06px"> </i><i style="letter-spacing:0.29px">Height"</i></span>
<div class="clip" style="left:40.5px;width:546.2px;top:265.70px;height:16.3px"><span class="t " style="left:307.30px;top:1.08px;font-size:11.6px;line-height:15px"><i style="letter-spacing:1.41px">=</i><i style="letter-spacing:0.06px"> </i><i style="letter-spacing:0.00px">1.5in</i></span></div>
<span class="t " style="left:589.20px;top:267.05px;font-size:11.1px;line-height:14px;letter-spacing:0.028px;color:#121212;">38.10mm</span>
<span class="t" style="left:16.30px;top:282.20px;font-size:12.4px;line-height:16px;font-weight:bold;color:#000;-webkit-text-stroke:.22px #000;transform:scaleX(0.900);transform-origin:0 0">11</span>
<span class="t " style="left:68.40px;top:283.08px;font-size:11.6px;line-height:15px"><i style="letter-spacing:0.01px">"Fixture</i><i style="letter-spacing:0.06px"> </i><i style="letter-spacing:0.06px">Table</i><i style="letter-spacing:0.06px"> </i><i style="letter-spacing:-0.19px">Raster"</i></span>
<div class="clip" style="left:40.5px;width:546.2px;top:282.00px;height:16.3px"><span class="t " style="left:307.30px;top:1.08px;font-size:11.6px;line-height:15px"><i style="letter-spacing:1.41px">=</i><i style="letter-spacing:0.06px"> </i><i style="letter-spacing:0.00px">2.00in</i></span></div>
<span class="t " style="left:589.20px;top:283.35px;font-size:11.1px;line-height:14px;letter-spacing:0.028px;color:#121212;">50.80mm</span>
<span class="t" style="left:16.30px;top:298.50px;font-size:12.4px;line-height:16px;font-weight:bold;color:#000;-webkit-text-stroke:.22px #000;transform:scaleX(0.900);transform-origin:0 0">12</span>
<span class="t " style="left:68.40px;top:299.38px;font-size:11.6px;line-height:15px"><i style="letter-spacing:0.22px">"Front</i><i style="letter-spacing:0.06px"> </i><i style="letter-spacing:-0.01px">Center-</i><i style="letter-spacing:0.06px"> </i><i style="letter-spacing:0.29px">Horizontal"</i></span>
<div class="clip" style="left:40.5px;width:546.2px;top:298.30px;height:16.3px"><span class="t " style="left:307.30px;top:1.08px;font-size:11.6px;line-height:15px"><i style="letter-spacing:1.41px">=</i><i style="letter-spacing:0.06px"> </i><i style="letter-spacing:0.25px">858mm</i></span></div>
<span class="t " style="left:589.20px;top:299.65px;font-size:11.1px;line-height:14px;letter-spacing:0.017px;color:#121212;">858.00mm</span>
<span class="t" style="left:16.30px;top:314.80px;font-size:12.4px;line-height:16px;font-weight:bold;color:#000;-webkit-text-stroke:.22px #000;transform:scaleX(0.900);transform-origin:0 0">13</span>
<span class="t " style="left:68.40px;top:315.68px;font-size:11.6px;line-height:15px"><i style="letter-spacing:0.04px">"Head</i><i style="letter-spacing:0.06px"> </i><i style="letter-spacing:0.17px">Angle"</i></span>
<div class="clip" style="left:40.5px;width:546.2px;top:314.60px;height:16.3px"><span class="t " style="left:307.30px;top:1.08px;font-size:11.6px;line-height:15px"><i style="letter-spacing:1.41px">=</i><i style="letter-spacing:0.06px"> </i><i style="letter-spacing:-0.02px">68.0deg</i></span></div>
<span class="t " style="left:589.20px;top:315.95px;font-size:11.1px;line-height:14px;letter-spacing:-0.073px;color:#121212;">68.00deg</span>
<span class="t" style="left:16.30px;top:331.10px;font-size:12.4px;line-height:16px;font-weight:bold;color:#000;-webkit-text-stroke:.22px #000;transform:scaleX(0.900);transform-origin:0 0">14</span>
<span class="t " style="left:68.40px;top:331.98px;font-size:11.6px;line-height:15px"><i style="letter-spacing:0.04px">"Head</i><i style="letter-spacing:0.06px"> </i><i style="letter-spacing:-0.06px">Tube</i><i style="letter-spacing:0.06px"> </i><i style="letter-spacing:0.15px">Length"</i></span>
<div class="clip" style="left:40.5px;width:546.2px;top:330.90px;height:16.3px"><span class="t " style="left:307.30px;top:1.08px;font-size:11.6px;line-height:15px"><i style="letter-spacing:1.41px">=</i><i style="letter-spacing:0.06px"> </i><i style="letter-spacing:0.32px">85mm</i></span></div>
<span class="t " style="left:589.20px;top:332.25px;font-size:11.1px;line-height:14px;letter-spacing:0.028px;color:#121212;">85.00mm</span>
<span class="t" style="left:16.30px;top:347.40px;font-size:12.4px;line-height:16px;font-weight:bold;color:#000;-webkit-text-stroke:.22px #000;transform:scaleX(0.900);transform-origin:0 0">15</span>
<span class="t " style="left:68.40px;top:348.28px;font-size:11.6px;line-height:15px"><i style="letter-spacing:0.00px">"Crank</i><i style="letter-spacing:0.06px"> </i><i style="letter-spacing:-0.18px">Axis</i><i style="letter-spacing:0.06px"> </i><i style="letter-spacing:0.29px">Height"</i></span>
<div class="clip" style="left:40.5px;width:546.2px;top:347.20px;height:16.3px"><span class="t " style="left:307.30px;top:1.08px;font-size:11.6px;line-height:15px"><i style="letter-spacing:1.41px">=</i><i style="letter-spacing:0.06px"> </i><i style="letter-spacing:0.25px">300mm</i></span></div>
<span class="t " style="left:589.20px;top:348.55px;font-size:11.1px;line-height:14px;letter-spacing:0.017px;color:#121212;">300.00mm</span>
<span class="t" style="left:16.30px;top:363.70px;font-size:12.4px;line-height:16px;font-weight:bold;color:#000;-webkit-text-stroke:.22px #000;transform:scaleX(0.900);transform-origin:0 0">16</span>
<span class="t " style="left:68.40px;top:364.58px;font-size:11.6px;line-height:15px"><i style="letter-spacing:0.22px">"Front</i><i style="letter-spacing:0.06px"> </i><i style="letter-spacing:-0.09px">Rim</i><i style="letter-spacing:0.06px"> </i><i style="letter-spacing:0.09px">Diameter"</i></span>
<div class="clip" style="left:40.5px;width:546.2px;top:363.50px;height:16.3px"><span class="t " style="left:307.30px;top:1.08px;font-size:11.6px;line-height:15px"><i style="letter-spacing:1.41px">=</i><i style="letter-spacing:0.06px"> </i><i style="letter-spacing:0.25px">622mm</i></span></div>
<span class="t " style="left:589.20px;top:364.85px;font-size:11.1px;line-height:14px;letter-spacing:0.017px;color:#121212;">622.00mm</span>
<span class="t" style="left:16.30px;top:380.00px;font-size:12.4px;line-height:16px;font-weight:bold;color:#000;-webkit-text-stroke:.22px #000;transform:scaleX(0.900);transform-origin:0 0">17</span>
<span class="t " style="left:68.40px;top:380.88px;font-size:11.6px;line-height:15px"><i style="letter-spacing:0.22px">"Front</i><i style="letter-spacing:0.06px"> </i><i style="letter-spacing:-0.13px">Tire</i><i style="letter-spacing:0.06px"> </i><i style="letter-spacing:0.29px">Height"</i></span>
<div class="clip" style="left:40.5px;width:546.2px;top:379.80px;height:16.3px"><span class="t " style="left:307.30px;top:1.08px;font-size:11.6px;line-height:15px"><i style="letter-spacing:1.41px">=</i><i style="letter-spacing:0.06px"> </i><i style="letter-spacing:0.32px">64mm</i></span></div>
<span class="t " style="left:589.20px;top:381.15px;font-size:11.1px;line-height:14px;letter-spacing:0.028px;color:#121212;">64.00mm</span>
<span class="t" style="left:16.30px;top:396.30px;font-size:12.4px;line-height:16px;font-weight:bold;color:#000;-webkit-text-stroke:.22px #000;transform:scaleX(0.900);transform-origin:0 0">18</span>
<span class="t " style="left:68.40px;top:397.18px;font-size:11.6px;line-height:15px"><i style="letter-spacing:-0.05px">"Headset</i><i style="letter-spacing:0.06px"> </i><i style="letter-spacing:-0.21px">Stack</i><i style="letter-spacing:0.06px"> </i><i style="letter-spacing:0.92px">-</i><i style="letter-spacing:0.06px"> </i><i style="letter-spacing:0.19px">Upper"</i></span>
<div class="clip" style="left:40.5px;width:546.2px;top:396.10px;height:16.3px"><span class="t " style="left:307.30px;top:1.08px;font-size:11.6px;line-height:15px"><i style="letter-spacing:1.41px">=</i><i style="letter-spacing:0.06px"> </i><i style="letter-spacing:0.13px">5.3mm</i></span></div>
<span class="t " style="left:589.20px;top:397.45px;font-size:11.1px;line-height:14px;letter-spacing:0.041px;color:#121212;">5.30mm</span>
<span class="t" style="left:16.30px;top:412.60px;font-size:12.4px;line-height:16px;font-weight:bold;color:#000;-webkit-text-stroke:.22px #000;transform:scaleX(0.900);transform-origin:0 0">19</span>
<span class="t " style="left:68.40px;top:413.48px;font-size:11.6px;line-height:15px"><i style="letter-spacing:-0.05px">"Headset</i><i style="letter-spacing:0.06px"> </i><i style="letter-spacing:-0.21px">Stack</i><i style="letter-spacing:0.06px"> </i><i style="letter-spacing:0.92px">-</i><i style="letter-spacing:0.06px"> </i><i style="letter-spacing:0.02px">Lower"</i></span>
<div class="clip" style="left:40.5px;width:546.2px;top:412.40px;height:16.3px"><span class="t " style="left:307.30px;top:1.08px;font-size:11.6px;line-height:15px"><i style="letter-spacing:1.41px">=</i><i style="letter-spacing:0.06px"> </i><i style="letter-spacing:0.42px">1mm</i></span></div>
<span class="t " style="left:589.20px;top:413.75px;font-size:11.1px;line-height:14px;letter-spacing:0.041px;color:#121212;">1.00mm</span>
<span class="t" style="left:16.30px;top:428.90px;font-size:12.4px;line-height:16px;font-weight:bold;color:#000;-webkit-text-stroke:.22px #000;transform:scaleX(0.900);transform-origin:0 0">20</span>
<span class="t " style="left:68.40px;top:429.78px;font-size:11.6px;line-height:15px"><i style="letter-spacing:0.07px">"Fork</i><i style="letter-spacing:0.06px"> </i><i style="letter-spacing:0.15px">Length"</i></span>
<div class="clip" style="left:40.5px;width:546.2px;top:428.70px;height:16.3px"><span class="t " style="left:307.30px;top:1.08px;font-size:11.6px;line-height:15px"><i style="letter-spacing:1.41px">=</i><i style="letter-spacing:0.06px"> </i><i style="letter-spacing:0.25px">571mm</i></span></div>
<span class="t " style="left:589.20px;top:430.05px;font-size:11.1px;line-height:14px;letter-spacing:0.017px;color:#121212;">571.00mm</span>
<span class="t" style="left:16.30px;top:445.20px;font-size:12.4px;line-height:16px;font-weight:bold;color:#000;-webkit-text-stroke:.22px #000;transform:scaleX(0.900);transform-origin:0 0">21</span>
<span class="t " style="left:68.40px;top:446.08px;font-size:11.6px;line-height:15px"><i style="letter-spacing:0.07px">"Fork</i><i style="letter-spacing:0.06px"> </i><i style="letter-spacing:0.17px">Offset"</i></span>
<div class="clip" style="left:40.5px;width:546.2px;top:445.00px;height:16.3px"><span class="t " style="left:307.30px;top:1.08px;font-size:11.6px;line-height:15px"><i style="letter-spacing:1.41px">=</i><i style="letter-spacing:0.06px"> </i><i style="letter-spacing:0.32px">44mm</i></span></div>
<span class="t " style="left:589.20px;top:446.35px;font-size:11.1px;line-height:14px;letter-spacing:0.028px;color:#121212;">44.00mm</span>
<span class="t" style="left:16.30px;top:461.50px;font-size:12.4px;line-height:16px;font-weight:bold;color:#000;-webkit-text-stroke:.22px #000;transform:scaleX(0.900);transform-origin:0 0">22</span>
<span class="t " style="left:68.40px;top:462.38px;font-size:11.6px;line-height:15px"><i style="letter-spacing:0.07px">"Fork</i><i style="letter-spacing:0.06px"> </i><i style="letter-spacing:-0.10px">Slider</i><i style="letter-spacing:0.06px"> </i><i style="letter-spacing:0.09px">Angle</i><i style="letter-spacing:0.06px"> </i><i style="letter-spacing:0.50px">from</i><i style="letter-spacing:0.06px"> </i><i style="letter-spacing:-0.20px">Steerer"</i></span>
<div class="clip" style="left:40.5px;width:546.2px;top:461.30px;height:16.3px"><span class="t " style="left:307.30px;top:1.08px;font-size:11.6px;line-height:15px"><i style="letter-spacing:1.41px">=</i><i style="letter-spacing:0.06px"> </i><i style="letter-spacing:0.11px">0deg</i></span></div>
<span class="t " style="left:589.20px;top:462.65px;font-size:11.1px;line-height:14px;letter-spacing:-0.075px;color:#121212;">0.00deg</span>
<span class="t" style="left:16.30px;top:477.80px;font-size:12.4px;line-height:16px;font-weight:bold;color:#000;-webkit-text-stroke:.22px #000;transform:scaleX(0.900);transform-origin:0 0">23</span>
<span class="t " style="left:68.40px;top:478.68px;font-size:11.6px;line-height:15px"><i style="letter-spacing:0.07px">"Fork</i><i style="letter-spacing:0.06px"> </i><i style="letter-spacing:-0.16px">Travel</i><i style="letter-spacing:0.06px"> </i><i style="letter-spacing:0.35px">Along</i><i style="letter-spacing:0.06px"> </i><i style="letter-spacing:-0.00px">Slider"</i></span>
<div class="clip" style="left:40.5px;width:546.2px;top:477.60px;height:16.3px"><span class="t " style="left:307.30px;top:1.08px;font-size:11.6px;line-height:15px"><i style="letter-spacing:1.41px">=</i><i style="letter-spacing:0.06px"> </i><i style="letter-spacing:0.25px">160mm</i></span></div>
<span class="t " style="left:589.20px;top:478.95px;font-size:11.1px;line-height:14px;letter-spacing:0.017px;color:#121212;">160.00mm</span>
<span class="t" style="left:16.30px;top:494.10px;font-size:12.4px;line-height:16px;font-weight:bold;color:#000;-webkit-text-stroke:.22px #000;transform:scaleX(0.900);transform-origin:0 0">24</span>
<span class="t " style="left:68.40px;top:494.98px;font-size:11.6px;line-height:15px"><i style="letter-spacing:0.07px">"Fork</i><i style="letter-spacing:0.06px"> </i><i style="letter-spacing:-0.38px">Sag</i><i style="letter-spacing:0.06px"> </i><i style="letter-spacing:-0.09px">Percent"</i></span>
<div class="clip" style="left:40.5px;width:546.2px;top:493.90px;height:16.3px"><span class="t " style="left:307.30px;top:1.08px;font-size:11.6px;line-height:15px"><i style="letter-spacing:1.41px">=</i><i style="letter-spacing:0.06px"> </i><i style="letter-spacing:0.32px">30mm</i><i style="letter-spacing:0.06px"> </i><i style="letter-spacing:1.44px">/</i><i style="letter-spacing:0.06px"> </i><i style="letter-spacing:0.42px">1mm</i></span></div>
<span class="t " style="left:589.20px;top:495.25px;font-size:11.1px;line-height:14px;letter-spacing:0.028px;color:#121212;">30.00mm</span>
<span class="t" style="left:16.30px;top:510.40px;font-size:12.4px;line-height:16px;font-weight:bold;color:#000;-webkit-text-stroke:.22px #000;transform:scaleX(0.900);transform-origin:0 0">25</span>
<span class="t " style="left:68.40px;top:511.28px;font-size:11.6px;line-height:15px"><i style="letter-spacing:-0.12px">"Bike</i><i style="letter-spacing:0.06px"> </i><i style="letter-spacing:-0.83px">UCS</i><i style="letter-spacing:0.06px"> </i><i style="letter-spacing:0.70px">to</i><i style="letter-spacing:0.06px"> </i><i style="letter-spacing:-0.11px">Crank</i><i style="letter-spacing:0.06px"> </i><i style="letter-spacing:-0.18px">Axis</i><i style="letter-spacing:0.06px"> </i><i style="letter-spacing:-0.05px">X"</i></span>
<div class="clip" style="left:40.5px;width:546.2px;top:510.20px;height:16.3px"><span class="t " style="left:307.30px;top:1.08px;font-size:11.6px;line-height:15px"><i style="letter-spacing:1.41px">=</i><i style="letter-spacing:0.06px"> </i><i style="letter-spacing:0.22px">"Front</i><i style="letter-spacing:0.06px"> </i><i style="letter-spacing:-0.01px">Center-</i><i style="letter-spacing:0.06px"> </i><i style="letter-spacing:0.29px">Horizontal"</i><i style="letter-spacing:0.06px"> </i><i style="letter-spacing:0.92px">-</i><i style="letter-spacing:0.06px"> </i><i style="letter-spacing:-0.25px">(</i><i style="letter-spacing:0.06px"> </i><i style="letter-spacing:0.07px">"Fork</i><i style="letter-spacing:0.06px"> </i><i style="letter-spacing:0.15px">Length"</i><i style="letter-spacing:0.06px"> </i><i style="letter-spacing:0.48px">*</i><i style="letter-spacing:0.06px"> </i><i style="letter-spacing:-0.03px">sin</i><i style="letter-spacing:0.06px"> </i><i style="letter-spacing:-0.25px">(</i><i style="letter-spacing:0.06px"> </i><i style="letter-spacing:0.04px">"Head</i><i style="letter-spacing:0.06px"> </i><i style="letter-spacing:0.17px">Angle"</i><i style="letter-spacing:0.06px"> </i><i style="letter-spacing:-0.25px">)</i><i style="letter-spacing:0.06px"> </i><i style="letter-spacing:-0.25px">)</i></span></div>
<span class="t " style="left:589.20px;top:511.55px;font-size:11.1px;line-height:14px;letter-spacing:-0.071px;color:#121212;">585.21deg</span>
<span class="t" style="left:16.30px;top:526.70px;font-size:12.4px;line-height:16px;font-weight:bold;color:#000;-webkit-text-stroke:.22px #000;transform:scaleX(0.900);transform-origin:0 0">26</span>
<span class="t " style="left:68.40px;top:527.58px;font-size:11.6px;line-height:15px"><i style="letter-spacing:-0.12px">"Bike</i><i style="letter-spacing:0.06px"> </i><i style="letter-spacing:-0.83px">UCS</i><i style="letter-spacing:0.06px"> </i><i style="letter-spacing:0.70px">to</i><i style="letter-spacing:0.06px"> </i><i style="letter-spacing:-0.11px">Crank</i><i style="letter-spacing:0.06px"> </i><i style="letter-spacing:-0.18px">Axis</i><i style="letter-spacing:0.06px"> </i><i style="letter-spacing:-0.27px">Y"</i></span>
<div class="clip" style="left:40.5px;width:546.2px;top:526.50px;height:16.3px"><span class="t " style="left:307.30px;top:1.08px;font-size:11.6px;line-height:15px"><i style="letter-spacing:1.41px">=</i><i style="letter-spacing:0.06px"> </i><i style="letter-spacing:-0.25px">(</i><i style="letter-spacing:0.06px"> </i><i style="letter-spacing:-0.25px">(</i><i style="letter-spacing:0.06px"> </i><i style="letter-spacing:0.22px">"Front</i><i style="letter-spacing:0.06px"> </i><i style="letter-spacing:-0.09px">Rim</i><i style="letter-spacing:0.06px"> </i><i style="letter-spacing:0.09px">Diameter"</i><i style="letter-spacing:0.06px"> </i><i style="letter-spacing:1.44px">/</i><i style="letter-spacing:0.06px"> </i><i style="letter-spacing:0.00px">2</i><i style="letter-spacing:0.06px"> </i><i style="letter-spacing:1.41px">+</i><i style="letter-spacing:0.06px"> </i><i style="letter-spacing:0.22px">"Front</i><i style="letter-spacing:0.06px"> </i><i style="letter-spacing:-0.13px">Tire</i><i style="letter-spacing:0.06px"> </i><i style="letter-spacing:0.29px">Height"</i><i style="letter-spacing:0.06px"> </i><i style="letter-spacing:-0.25px">)</i><i style="letter-spacing:0.06px"> </i><i style="letter-spacing:0.92px">-</i><i style="letter-spacing:0.06px"> </i><i style="letter-spacing:0.00px">"Crank</i><i style="letter-spacing:0.06px"> </i><i style="letter-spacing:-0.18px">Axis</i><i style="letter-spacing:0.06px"> </i><i style="letter-spacing:0.29px">Height"</i><i style="letter-spacing:0.06px"> </i><i style="letter-spacing:-0.25px">)</i></span></div>
<span class="t " style="left:589.20px;top:527.85px;font-size:11.1px;line-height:14px;letter-spacing:-0.071px;color:#121212;">632.72deg</span>
<span class="t" style="left:16.30px;top:543.00px;font-size:12.4px;line-height:16px;font-weight:bold;color:#000;-webkit-text-stroke:.22px #000;transform:scaleX(0.900);transform-origin:0 0">27</span>
<span class="t " style="left:68.40px;top:543.88px;font-size:11.6px;line-height:15px"><i style="letter-spacing:-0.12px">"Bike</i><i style="letter-spacing:0.06px"> </i><i style="letter-spacing:-0.83px">UCS</i><i style="letter-spacing:0.06px"> </i><i style="letter-spacing:0.70px">to</i><i style="letter-spacing:0.06px"> </i><i style="letter-spacing:-0.11px">Crank</i><i style="letter-spacing:0.06px"> </i><i style="letter-spacing:-0.18px">Axis</i><i style="letter-spacing:0.06px"> </i><i style="letter-spacing:0.17px">Angle"</i></span>
<div class="clip" style="left:40.5px;width:546.2px;top:542.80px;height:16.3px"><span class="t " style="left:307.30px;top:1.08px;font-size:11.6px;line-height:15px"><i style="letter-spacing:1.41px">=</i><i style="letter-spacing:0.06px"> </i><i style="letter-spacing:0.26px">atn</i><i style="letter-spacing:0.06px"> </i><i style="letter-spacing:-0.25px">(</i><i style="letter-spacing:0.06px"> </i><i style="letter-spacing:-0.12px">"Bike</i><i style="letter-spacing:0.06px"> </i><i style="letter-spacing:-0.83px">UCS</i><i style="letter-spacing:0.06px"> </i><i style="letter-spacing:0.70px">to</i><i style="letter-spacing:0.06px"> </i><i style="letter-spacing:-0.11px">Crank</i><i style="letter-spacing:0.06px"> </i><i style="letter-spacing:-0.18px">Axis</i><i style="letter-spacing:0.06px"> </i><i style="letter-spacing:-0.27px">Y"</i><i style="letter-spacing:0.06px"> </i><i style="letter-spacing:1.44px">/</i><i style="letter-spacing:0.06px"> </i><i style="letter-spacing:-0.12px">"Bike</i><i style="letter-spacing:0.06px"> </i><i style="letter-spacing:-0.83px">UCS</i><i style="letter-spacing:0.06px"> </i><i style="letter-spacing:0.70px">to</i><i style="letter-spacing:0.06px"> </i><i style="letter-spacing:-0.11px">Crank</i><i style="letter-spacing:0.06px"> </i><i style="letter-spacing:-0.18px">Axis</i><i style="letter-spacing:0.06px"> </i><i style="letter-spacing:-0.05px">X"</i><i style="letter-spacing:0.06px"> </i><i style="letter-spacing:-0.25px">)</i></span></div>
<span class="t " style="left:589.20px;top:544.15px;font-size:11.1px;line-height:14px;letter-spacing:-0.073px;color:#121212;">47.23deg</span>
<span class="t" style="left:16.30px;top:559.30px;font-size:12.4px;line-height:16px;font-weight:bold;color:#000;-webkit-text-stroke:.22px #000;transform:scaleX(0.900);transform-origin:0 0">28</span>
<span class="t " style="left:68.40px;top:560.18px;font-size:11.6px;line-height:15px"><i style="letter-spacing:-0.12px">"Bike</i><i style="letter-spacing:0.06px"> </i><i style="letter-spacing:-0.83px">UCS</i><i style="letter-spacing:0.06px"> </i><i style="letter-spacing:0.70px">to</i><i style="letter-spacing:0.06px"> </i><i style="letter-spacing:-0.11px">Crank</i><i style="letter-spacing:0.06px"> </i><i style="letter-spacing:-0.18px">Axis</i><i style="letter-spacing:0.06px"> </i><i style="letter-spacing:0.15px">Direct"</i></span>
<div class="clip" style="left:40.5px;width:546.2px;top:559.10px;height:16.3px"><span class="t " style="left:307.30px;top:1.08px;font-size:11.6px;line-height:15px"><i style="letter-spacing:1.41px">=</i><i style="letter-spacing:0.06px"> </i><i style="letter-spacing:0.06px">sqr</i><i style="letter-spacing:0.06px"> </i><i style="letter-spacing:-0.25px">(</i><i style="letter-spacing:0.06px"> </i><i style="letter-spacing:-0.12px">"Bike</i><i style="letter-spacing:0.06px"> </i><i style="letter-spacing:-0.83px">UCS</i><i style="letter-spacing:0.06px"> </i><i style="letter-spacing:0.70px">to</i><i style="letter-spacing:0.06px"> </i><i style="letter-spacing:-0.11px">Crank</i><i style="letter-spacing:0.06px"> </i><i style="letter-spacing:-0.18px">Axis</i><i style="letter-spacing:0.06px"> </i><i style="letter-spacing:-0.05px">X"</i><i style="letter-spacing:0.06px"> </i><i style="letter-spacing:2.75px">^</i><i style="letter-spacing:0.06px"> </i><i style="letter-spacing:0.00px">2</i><i style="letter-spacing:0.06px"> </i><i style="letter-spacing:1.41px">+</i><i style="letter-spacing:0.06px"> </i><i style="letter-spacing:-0.12px">"Bike</i><i style="letter-spacing:0.06px"> </i><i style="letter-spacing:-0.83px">UCS</i><i style="letter-spacing:0.06px"> </i><i style="letter-spacing:0.70px">to</i><i style="letter-spacing:0.06px"> </i><i style="letter-spacing:-0.11px">Crank</i><i style="letter-spacing:0.06px"> </i><i style="letter-spacing:-0.18px">Axis</i><i style="letter-spacing:0.06px"> </i><i style="letter-spacing:-0.27px">Y"</i><i style="letter-spacing:0.06px"> </i><i style="letter-spacing:2.75px">^</i><i style="letter-spacing:0.06px"> </i><i style="letter-spacing:0.00px">2</i><i style="letter-spacing:0.06px"> </i><i style="letter-spacing:-0.25px">)</i></span></div>
<span class="t " style="left:589.20px;top:560.45px;font-size:11.1px;line-height:14px;letter-spacing:-0.071px;color:#121212;">861.86deg</span>
<span class="t" style="left:16.30px;top:575.60px;font-size:12.4px;line-height:16px;font-weight:bold;color:#000;-webkit-text-stroke:.22px #000;transform:scaleX(0.900);transform-origin:0 0">29</span>
<span class="t " style="left:68.40px;top:576.48px;font-size:11.6px;line-height:15px"><i style="letter-spacing:0.00px">"Crank</i><i style="letter-spacing:0.06px"> </i><i style="letter-spacing:-0.18px">Axis</i><i style="letter-spacing:0.06px"> </i><i style="letter-spacing:0.50px">from</i><i style="letter-spacing:0.06px"> </i><i style="letter-spacing:0.09px">Handlebar</i><i style="letter-spacing:0.06px"> </i><i style="letter-spacing:-0.83px">UCS</i><i style="letter-spacing:0.06px"> </i><i style="letter-spacing:0.17px">Angle"</i></span>
<div class="clip" style="left:40.5px;width:546.2px;top:575.40px;height:16.3px"><span class="t " style="left:307.30px;top:1.08px;font-size:11.6px;line-height:15px"><i style="letter-spacing:1.41px">=</i><i style="letter-spacing:0.06px"> </i><i style="letter-spacing:-0.12px">"Bike</i><i style="letter-spacing:0.06px"> </i><i style="letter-spacing:-0.83px">UCS</i><i style="letter-spacing:0.06px"> </i><i style="letter-spacing:0.70px">to</i><i style="letter-spacing:0.06px"> </i><i style="letter-spacing:-0.11px">Crank</i><i style="letter-spacing:0.06px"> </i><i style="letter-spacing:-0.18px">Axis</i><i style="letter-spacing:0.06px"> </i><i style="letter-spacing:0.17px">Angle"</i><i style="letter-spacing:0.06px"> </i><i style="letter-spacing:0.92px">-</i><i style="letter-spacing:0.06px"> </i><i style="letter-spacing:0.00px">90</i><i style="letter-spacing:0.06px"> </i><i style="letter-spacing:1.41px">+</i><i style="letter-spacing:0.06px"> </i><i style="letter-spacing:0.04px">"Head</i><i style="letter-spacing:0.06px"> </i><i style="letter-spacing:0.17px">Angle"</i></span></div>
<span class="t " style="left:589.20px;top:576.75px;font-size:11.1px;line-height:14px;letter-spacing:-0.073px;color:#121212;">25.23deg</span>
<span class="t" style="left:16.30px;top:591.90px;font-size:12.4px;line-height:16px;font-weight:bold;color:#000;-webkit-text-stroke:.22px #000;transform:scaleX(0.900);transform-origin:0 0">30</span>
<span class="t " style="left:68.40px;top:592.78px;font-size:11.6px;line-height:15px"><i style="letter-spacing:0.00px">"Crank</i><i style="letter-spacing:0.06px"> </i><i style="letter-spacing:-0.18px">Axis</i><i style="letter-spacing:0.06px"> </i><i style="letter-spacing:0.50px">from</i><i style="letter-spacing:0.06px"> </i><i style="letter-spacing:0.09px">Handlebar</i><i style="letter-spacing:0.06px"> </i><i style="letter-spacing:-0.83px">UCS</i><i style="letter-spacing:0.06px"> </i><i style="letter-spacing:-0.05px">X"</i></span>
<div class="clip" style="left:40.5px;width:546.2px;top:591.70px;height:16.3px"><span class="t " style="left:307.30px;top:1.08px;font-size:11.6px;line-height:15px"><i style="letter-spacing:1.41px">=</i><i style="letter-spacing:0.06px"> </i><i style="letter-spacing:-0.12px">"Bike</i><i style="letter-spacing:0.06px"> </i><i style="letter-spacing:-0.83px">UCS</i><i style="letter-spacing:0.06px"> </i><i style="letter-spacing:0.70px">to</i><i style="letter-spacing:0.06px"> </i><i style="letter-spacing:-0.11px">Crank</i><i style="letter-spacing:0.06px"> </i><i style="letter-spacing:-0.18px">Axis</i><i style="letter-spacing:0.06px"> </i><i style="letter-spacing:0.15px">Direct"</i><i style="letter-spacing:0.06px"> </i><i style="letter-spacing:0.48px">*</i><i style="letter-spacing:0.06px"> </i><i style="letter-spacing:-0.14px">cos</i><i style="letter-spacing:0.06px"> </i><i style="letter-spacing:-0.25px">(</i><i style="letter-spacing:0.06px"> </i><i style="letter-spacing:0.00px">"Crank</i><i style="letter-spacing:0.06px"> </i><i style="letter-spacing:-0.18px">Axis</i><i style="letter-spacing:0.06px"> </i><i style="letter-spacing:0.50px">from</i><i style="letter-spacing:0.06px"> </i><i style="letter-spacing:0.09px">Handlebar</i><i style="letter-spacing:0.06px"> </i><i style="letter-spacing:-0.83px">UCS</i><i style="letter-spacing:0.06px"> </i><i style="letter-spacing:0.17px">Angle"</i><i style="letter-spacing:0.06px"> </i><i style="letter-spacing:-0.25px">)</i></span></div>
<span class="t " style="left:589.20px;top:593.05px;font-size:11.1px;line-height:14px;letter-spacing:-0.071px;color:#121212;">779.62deg</span>
<span class="t" style="left:16.30px;top:608.20px;font-size:12.4px;line-height:16px;font-weight:bold;color:#000;-webkit-text-stroke:.22px #000;transform:scaleX(0.900);transform-origin:0 0">31</span>
<span class="t " style="left:68.40px;top:609.08px;font-size:11.6px;line-height:15px"><i style="letter-spacing:0.00px">"Crank</i><i style="letter-spacing:0.06px"> </i><i style="letter-spacing:-0.18px">Axis</i><i style="letter-spacing:0.06px"> </i><i style="letter-spacing:0.50px">from</i><i style="letter-spacing:0.06px"> </i><i style="letter-spacing:0.09px">Handlebar</i><i style="letter-spacing:0.06px"> </i><i style="letter-spacing:-0.83px">UCS</i><i style="letter-spacing:0.06px"> </i><i style="letter-spacing:-0.27px">Y"</i></span>
<div class="clip" style="left:40.5px;width:546.2px;top:608.00px;height:16.3px"><span class="t " style="left:307.30px;top:1.08px;font-size:11.6px;line-height:15px"><i style="letter-spacing:1.41px">=</i><i style="letter-spacing:0.06px"> </i><i style="letter-spacing:-0.12px">"Bike</i><i style="letter-spacing:0.06px"> </i><i style="letter-spacing:-0.83px">UCS</i><i style="letter-spacing:0.06px"> </i><i style="letter-spacing:0.70px">to</i><i style="letter-spacing:0.06px"> </i><i style="letter-spacing:-0.11px">Crank</i><i style="letter-spacing:0.06px"> </i><i style="letter-spacing:-0.18px">Axis</i><i style="letter-spacing:0.06px"> </i><i style="letter-spacing:0.15px">Direct"</i><i style="letter-spacing:0.06px"> </i><i style="letter-spacing:0.48px">*</i><i style="letter-spacing:0.06px"> </i><i style="letter-spacing:-0.03px">sin</i><i style="letter-spacing:0.06px"> </i><i style="letter-spacing:-0.25px">(</i><i style="letter-spacing:0.06px"> </i><i style="letter-spacing:0.00px">"Crank</i><i style="letter-spacing:0.06px"> </i><i style="letter-spacing:-0.18px">Axis</i><i style="letter-spacing:0.06px"> </i><i style="letter-spacing:0.50px">from</i><i style="letter-spacing:0.06px"> </i><i style="letter-spacing:0.09px">Handlebar</i><i style="letter-spacing:0.06px"> </i><i style="letter-spacing:-0.83px">UCS</i><i style="letter-spacing:0.06px"> </i><i style="letter-spacing:0.17px">Angle"</i><i style="letter-spacing:0.06px"> </i><i style="letter-spacing:-0.25px">)</i></span></div>
<span class="t " style="left:589.20px;top:609.35px;font-size:11.1px;line-height:14px;letter-spacing:-0.071px;color:#121212;">367.43deg</span>
<span class="t" style="left:16.30px;top:624.50px;font-size:12.4px;line-height:16px;font-weight:bold;color:#000;-webkit-text-stroke:.22px #000;transform:scaleX(0.900);transform-origin:0 0">32</span>
<span class="t " style="left:68.40px;top:625.38px;font-size:11.6px;line-height:15px"><i style="letter-spacing:0.00px">"Crank</i><i style="letter-spacing:0.06px"> </i><i style="letter-spacing:-0.18px">Axis</i><i style="letter-spacing:0.06px"> </i><i style="letter-spacing:0.70px">to</i><i style="letter-spacing:0.06px"> </i><i style="letter-spacing:0.09px">Handlebar</i><i style="letter-spacing:0.06px"> </i><i style="letter-spacing:-0.26px">End</i><i style="letter-spacing:0.06px"> </i><i style="letter-spacing:0.09px">Handlebar</i><i style="letter-spacing:0.06px"> </i><i style="letter-spacing:-0.83px">UCS</i><i style="letter-spacing:0.06px"> </i><i style="letter-spacing:0.17px">Angle"</i></span>
<div class="clip" style="left:40.5px;width:546.2px;top:624.30px;height:16.3px"><span class="t " style="left:307.30px;top:1.08px;font-size:11.6px;line-height:15px"><i style="letter-spacing:1.41px">=</i><i style="letter-spacing:0.06px"> </i><i style="letter-spacing:0.25px">"Hand</i><i style="letter-spacing:0.06px"> </i><i style="letter-spacing:0.10px">Grip</i><i style="letter-spacing:0.06px"> </i><i style="letter-spacing:-0.26px">End</i><i style="letter-spacing:0.06px"> </i><i style="letter-spacing:0.70px">to</i><i style="letter-spacing:0.06px"> </i><i style="letter-spacing:-0.11px">Crank</i><i style="letter-spacing:0.06px"> </i><i style="letter-spacing:-0.18px">Axis</i><i style="letter-spacing:0.06px"> </i><i style="letter-spacing:0.17px">Angle"</i><i style="letter-spacing:0.06px"> </i><i style="letter-spacing:0.92px">-</i><i style="letter-spacing:0.06px"> </i><i style="letter-spacing:0.00px">90</i><i style="letter-spacing:0.06px"> </i><i style="letter-spacing:1.41px">+</i><i style="letter-spacing:0.06px"> </i><i style="letter-spacing:0.04px">"Head</i><i style="letter-spacing:0.06px"> </i><i style="letter-spacing:0.17px">Angle"</i></span></div>
<span class="t " style="left:589.20px;top:625.65px;font-size:11.1px;line-height:14px;letter-spacing:-0.073px;color:#121212;">35.50deg</span>
<span class="t" style="left:16.30px;top:640.80px;font-size:12.4px;line-height:16px;font-weight:bold;color:#000;-webkit-text-stroke:.22px #000;transform:scaleX(0.900);transform-origin:0 0">33</span>
<span class="t " style="left:68.40px;top:641.68px;font-size:11.6px;line-height:15px"><i style="letter-spacing:0.00px">"Crank</i><i style="letter-spacing:0.06px"> </i><i style="letter-spacing:-0.18px">Axis</i><i style="letter-spacing:0.06px"> </i><i style="letter-spacing:0.70px">to</i><i style="letter-spacing:0.06px"> </i><i style="letter-spacing:0.09px">Handlebar</i><i style="letter-spacing:0.06px"> </i><i style="letter-spacing:-0.26px">End</i><i style="letter-spacing:0.06px"> </i><i style="letter-spacing:0.09px">Handlebar</i><i style="letter-spacing:0.06px"> </i><i style="letter-spacing:-0.83px">UCS</i><i style="letter-spacing:0.06px"> </i><i style="letter-spacing:-0.05px">X"</i></span>
<div class="clip" style="left:40.5px;width:546.2px;top:640.60px;height:16.3px"><span class="t " style="left:307.30px;top:1.08px;font-size:11.6px;line-height:15px"><i style="letter-spacing:1.41px">=</i><i style="letter-spacing:0.06px"> </i><i style="letter-spacing:0.25px">"Hand</i><i style="letter-spacing:0.06px"> </i><i style="letter-spacing:0.10px">Grip</i><i style="letter-spacing:0.06px"> </i><i style="letter-spacing:-0.26px">End</i><i style="letter-spacing:0.06px"> </i><i style="letter-spacing:0.70px">to</i><i style="letter-spacing:0.06px"> </i><i style="letter-spacing:-0.11px">Crank</i><i style="letter-spacing:0.06px"> </i><i style="letter-spacing:-0.18px">Axis</i><i style="letter-spacing:0.06px"> </i><i style="letter-spacing:0.15px">Direct"</i><i style="letter-spacing:0.06px"> </i><i style="letter-spacing:0.48px">*</i><i style="letter-spacing:0.06px"> </i><i style="letter-spacing:-0.14px">cos</i><i style="letter-spacing:0.06px"> </i><i style="letter-spacing:-0.25px">(</i><i style="letter-spacing:0.06px"> </i><i style="letter-spacing:0.00px">"Crank</i><i style="letter-spacing:0.06px"> </i><i style="letter-spacing:-0.18px">Axis</i><i style="letter-spacing:0.06px"> </i><i style="letter-spacing:0.70px">to</i><i style="letter-spacing:0.06px"> </i><i style="letter-spacing:0.09px">Handlebar</i><i style="letter-spacing:0.06px"> </i><i style="letter-spacing:-0.26px">End</i><i style="letter-spacing:0.06px"> </i><i style="letter-spacing:0.09px">Handlebar</i><i style="letter-spacing:0.06px"> </i><i style="letter-spacing:-0.83px">UCS</i><i style="letter-spacing:0.06px"> </i><i style="letter-spacing:0.17px">Angle"</i><i style="letter-spacing:0.06px"> </i><i style="letter-spacing:-0.25px">)</i></span></div>
<span class="t " style="left:589.20px;top:641.95px;font-size:11.1px;line-height:14px;letter-spacing:-0.071px;color:#121212;">679.79deg</span>
<span class="t" style="left:16.30px;top:657.10px;font-size:12.4px;line-height:16px;font-weight:bold;color:#000;-webkit-text-stroke:.22px #000;transform:scaleX(0.900);transform-origin:0 0">34</span>
<span class="t " style="left:68.40px;top:657.98px;font-size:11.6px;line-height:15px"><i style="letter-spacing:0.00px">"Crank</i><i style="letter-spacing:0.06px"> </i><i style="letter-spacing:-0.18px">Axis</i><i style="letter-spacing:0.06px"> </i><i style="letter-spacing:0.70px">to</i><i style="letter-spacing:0.06px"> </i><i style="letter-spacing:0.09px">Handlebar</i><i style="letter-spacing:0.06px"> </i><i style="letter-spacing:-0.26px">End</i><i style="letter-spacing:0.06px"> </i><i style="letter-spacing:0.09px">Handlebar</i><i style="letter-spacing:0.06px"> </i><i style="letter-spacing:-0.83px">UCS</i><i style="letter-spacing:0.06px"> </i><i style="letter-spacing:-0.27px">Y"</i></span>
<div class="clip" style="left:40.5px;width:546.2px;top:656.90px;height:16.3px"><span class="t " style="left:307.30px;top:1.08px;font-size:11.6px;line-height:15px"><i style="letter-spacing:1.41px">=</i><i style="letter-spacing:0.06px"> </i><i style="letter-spacing:0.25px">"Hand</i><i style="letter-spacing:0.06px"> </i><i style="letter-spacing:0.10px">Grip</i><i style="letter-spacing:0.06px"> </i><i style="letter-spacing:-0.26px">End</i><i style="letter-spacing:0.06px"> </i><i style="letter-spacing:0.70px">to</i><i style="letter-spacing:0.06px"> </i><i style="letter-spacing:-0.11px">Crank</i><i style="letter-spacing:0.06px"> </i><i style="letter-spacing:-0.18px">Axis</i><i style="letter-spacing:0.06px"> </i><i style="letter-spacing:0.15px">Direct"</i><i style="letter-spacing:0.06px"> </i><i style="letter-spacing:0.48px">*</i><i style="letter-spacing:0.06px"> </i><i style="letter-spacing:-0.03px">sin</i><i style="letter-spacing:0.06px"> </i><i style="letter-spacing:-0.25px">(</i><i style="letter-spacing:0.06px"> </i><i style="letter-spacing:0.00px">"Crank</i><i style="letter-spacing:0.06px"> </i><i style="letter-spacing:-0.18px">Axis</i><i style="letter-spacing:0.06px"> </i><i style="letter-spacing:0.70px">to</i><i style="letter-spacing:0.06px"> </i><i style="letter-spacing:0.09px">Handlebar</i><i style="letter-spacing:0.06px"> </i><i style="letter-spacing:-0.26px">End</i><i style="letter-spacing:0.06px"> </i><i style="letter-spacing:0.09px">Handlebar</i><i style="letter-spacing:0.06px"> </i><i style="letter-spacing:-0.83px">UCS</i><i style="letter-spacing:0.06px"> </i><i style="letter-spacing:0.17px">Angle"</i><i style="letter-spacing:0.06px"> </i><i style="letter-spacing:-0.25px">)</i></span></div>
<span class="t " style="left:589.20px;top:658.25px;font-size:11.1px;line-height:14px;letter-spacing:-0.071px;color:#121212;">484.89deg</span>
<span class="t" style="left:16.30px;top:673.40px;font-size:12.4px;line-height:16px;font-weight:bold;color:#000;-webkit-text-stroke:.22px #000;transform:scaleX(0.900);transform-origin:0 0">35</span>
<span class="t " style="left:68.40px;top:674.28px;font-size:11.6px;line-height:15px"><i style="letter-spacing:0.13px">"Handlebar</i><i style="letter-spacing:0.06px"> </i><i style="letter-spacing:-0.26px">End</i><i style="letter-spacing:0.06px"> </i><i style="letter-spacing:0.50px">from</i><i style="letter-spacing:0.06px"> </i><i style="letter-spacing:0.09px">Handlebar</i><i style="letter-spacing:0.06px"> </i><i style="letter-spacing:-0.83px">UCS</i><i style="letter-spacing:0.06px"> </i><i style="letter-spacing:-0.05px">X"</i></span>
<div class="clip" style="left:40.5px;width:546.2px;top:673.20px;height:16.3px"><span class="t " style="left:307.30px;top:1.08px;font-size:11.6px;line-height:15px"><i style="letter-spacing:1.41px">=</i><i style="letter-spacing:0.06px"> </i><i style="letter-spacing:0.00px">"Crank</i><i style="letter-spacing:0.06px"> </i><i style="letter-spacing:-0.18px">Axis</i><i style="letter-spacing:0.06px"> </i><i style="letter-spacing:0.50px">from</i><i style="letter-spacing:0.06px"> </i><i style="letter-spacing:0.09px">Handlebar</i><i style="letter-spacing:0.06px"> </i><i style="letter-spacing:-0.83px">UCS</i><i style="letter-spacing:0.06px"> </i><i style="letter-spacing:-0.05px">X"</i><i style="letter-spacing:0.06px"> </i><i style="letter-spacing:0.92px">-</i><i style="letter-spacing:0.06px"> </i><i style="letter-spacing:0.00px">"Crank</i><i style="letter-spacing:0.06px"> </i><i style="letter-spacing:-0.18px">Axis</i><i style="letter-spacing:0.06px"> </i><i style="letter-spacing:0.70px">to</i><i style="letter-spacing:0.06px"> </i><i style="letter-spacing:0.09px">Handlebar</i><i style="letter-spacing:0.06px"> </i><i style="letter-spacing:-0.26px">End</i><i style="letter-spacing:0.06px"> </i><i style="letter-spacing:0.09px">Handlebar</i><i style="letter-spacing:0.06px"> </i><i style="letter-spacing:-0.83px">UCS</i><i style="letter-spacing:0.06px"> </i><i style="letter-spacing:-0.05px">X"</i></span></div>
<span class="t " style="left:589.20px;top:674.55px;font-size:11.1px;line-height:14px;letter-spacing:-0.073px;color:#121212;">99.83deg</span>
<span class="t" style="left:16.30px;top:689.70px;font-size:12.4px;line-height:16px;font-weight:bold;color:#000;-webkit-text-stroke:.22px #000;transform:scaleX(0.900);transform-origin:0 0">36</span>
<span class="t " style="left:68.40px;top:690.58px;font-size:11.6px;line-height:15px"><i style="letter-spacing:0.13px">"Handlebar</i><i style="letter-spacing:0.06px"> </i><i style="letter-spacing:-0.26px">End</i><i style="letter-spacing:0.06px"> </i><i style="letter-spacing:0.50px">from</i><i style="letter-spacing:0.06px"> </i><i style="letter-spacing:0.09px">Handlebar</i><i style="letter-spacing:0.06px"> </i><i style="letter-spacing:-0.83px">UCS</i><i style="letter-spacing:0.06px"> </i><i style="letter-spacing:-0.27px">Y"</i></span>
<div class="clip" style="left:40.5px;width:546.2px;top:689.50px;height:16.3px"><span class="t " style="left:307.30px;top:1.08px;font-size:11.6px;line-height:15px"><i style="letter-spacing:1.41px">=</i><i style="letter-spacing:0.06px"> </i><i style="letter-spacing:0.00px">"Crank</i><i style="letter-spacing:0.06px"> </i><i style="letter-spacing:-0.18px">Axis</i><i style="letter-spacing:0.06px"> </i><i style="letter-spacing:0.70px">to</i><i style="letter-spacing:0.06px"> </i><i style="letter-spacing:0.09px">Handlebar</i><i style="letter-spacing:0.06px"> </i><i style="letter-spacing:-0.26px">End</i><i style="letter-spacing:0.06px"> </i><i style="letter-spacing:0.09px">Handlebar</i><i style="letter-spacing:0.06px"> </i><i style="letter-spacing:-0.83px">UCS</i><i style="letter-spacing:0.06px"> </i><i style="letter-spacing:-0.27px">Y"</i><i style="letter-spacing:0.06px"> </i><i style="letter-spacing:0.92px">-</i><i style="letter-spacing:0.06px"> </i><i style="letter-spacing:0.00px">"Crank</i><i style="letter-spacing:0.06px"> </i><i style="letter-spacing:-0.18px">Axis</i><i style="letter-spacing:0.06px"> </i><i style="letter-spacing:0.50px">from</i><i style="letter-spacing:0.06px"> </i><i style="letter-spacing:0.09px">Handlebar</i><i style="letter-spacing:0.06px"> </i><i style="letter-spacing:-0.83px">UCS</i><i style="letter-spacing:0.06px"> </i><i style="letter-spacing:-0.27px">Y"</i></span></div>
<span class="t " style="left:589.20px;top:690.85px;font-size:11.1px;line-height:14px;letter-spacing:0.021px;color:#121212;">117.46deg</span>
<span class="t" style="left:16.30px;top:706.00px;font-size:12.4px;line-height:16px;font-weight:bold;color:#000;-webkit-text-stroke:.22px #000;transform:scaleX(0.900);transform-origin:0 0">37</span>
<span class="t " style="left:68.40px;top:706.88px;font-size:11.6px;line-height:15px"><i style="letter-spacing:-0.24px">"Sweep</i><i style="letter-spacing:0.06px"> </i><i style="letter-spacing:-0.29px">Plane</i><i style="letter-spacing:0.06px"> </i><i style="letter-spacing:0.09px">Angle</i><i style="letter-spacing:0.06px"> </i><i style="letter-spacing:0.50px">from</i><i style="letter-spacing:0.06px"> </i><i style="letter-spacing:-0.16px">Stem</i><i style="letter-spacing:0.06px"> </i><i style="letter-spacing:-0.42px">Base"</i></span>
<div class="clip" style="left:40.5px;width:546.2px;top:705.80px;height:16.3px"><span class="t " style="left:307.30px;top:1.08px;font-size:11.6px;line-height:15px"><i style="letter-spacing:1.41px">=</i><i style="letter-spacing:0.06px"> </i><i style="letter-spacing:0.00px">90</i><i style="letter-spacing:0.06px"> </i><i style="letter-spacing:0.92px">-</i><i style="letter-spacing:0.06px"> </i><i style="letter-spacing:0.04px">"Head</i><i style="letter-spacing:0.06px"> </i><i style="letter-spacing:0.17px">Angle"</i><i style="letter-spacing:0.06px"> </i><i style="letter-spacing:1.41px">+</i><i style="letter-spacing:0.06px"> </i><i style="letter-spacing:0.13px">"Handlebar</i><i style="letter-spacing:0.06px"> </i><i style="letter-spacing:-0.41px">Sweep</i><i style="letter-spacing:0.06px"> </i><i style="letter-spacing:0.17px">Angle"</i></span></div>
<span class="t " style="left:589.20px;top:707.15px;font-size:11.1px;line-height:14px;letter-spacing:-0.073px;color:#121212;">42.00deg</span>
</div></div>

<!-- toolbar / icon layer -->
<svg class="abs" style="left:0;top:0" width="885" height="800" viewBox="0 0 885 800">
  <defs>
    <g id="eye">
      <path d="M-4.4 .3Q0 -5.8 4.4 .3Q0 6 -4.4 .3Z" fill="none" stroke="#f8f8f8" stroke-width="2.4" opacity=".9"/>
      <path d="M-4.4 .3Q0 -5.8 4.4 .3Q0 6 -4.4 .3Z" fill="#fbfbfb" stroke="#3c3c3c" stroke-width=".9"/>
      <path d="M-4.4 .3Q0 -5.8 4.4 .3" fill="none" stroke="#161616" stroke-width="1.4"/>
      <circle cx="0" cy=".2" r="2.35" fill="#8a8a8a"/>
      <circle cx="0" cy=".2" r="1.8" fill="#080808"/><circle cx=".2" cy="-.9" r=".6" fill="#e8e8e8"/>
    </g>
    <g id="undo">
      <path d="M341 60.2L341 66.9L347.7 66.6L346 64.9C348.6 63.9 351.3 64.8 351.6 67.4C351.8 69.3 351 70.6 349.6 71.6L351.6 72.4C354 70.9 355.2 68.8 354.6 65.9C353.9 62.3 349.3 60 344.4 62.9Z" fill="#cbcbcb" stroke="#ababab" stroke-width=".75" stroke-linejoin="round"/>
    </g>
  </defs>
  <!-- scrollbar -->
  <line x1="771.1" y1="90" x2="771.1" y2="714" stroke="#e2e2e2" stroke-width="1"/>
  <rect x="759.3" y="109.2" width="4.9" height="196.6" fill="#848484"/>
  <!-- toolbar buttons -->
  <g fill="#f1f1f1" stroke="#a9a9a9" stroke-width="1.1">
    <rect x="35.6" y="54.2" width="24.6" height="24.6"/><rect x="62.7" y="54.2" width="24.6" height="24.6"/><rect x="89.8" y="54.2" width="24.6" height="24.6"/>
  </g>
  <g fill="none" stroke="#fafafa" stroke-width="1">
    <rect x="36.7" y="55.3" width="22.4" height="22.4"/><rect x="63.8" y="55.3" width="22.4" height="22.4"/><rect x="90.9" y="55.3" width="22.4" height="22.4"/>
  </g>
  <rect x="116.9" y="54.2" width="24.6" height="24.6" fill="#b6b6b6" stroke="#8d8d8d" stroke-width="1.2"/>
  <!-- 1: sigma -->
  <path d="M39.9 58.7H52.8V62H51.1V60.1H43.7L49 66.2L41.9 72.7H49.6V73.95H39.9V72.9L46.3 66.5L39.9 59.9Z" fill="#0d0d0d"/>
  <use href="#eye" x="52.1" y="71.2"/>
  <!-- 2: sketch fillet w/ grid -->
  <g stroke="#e6e6e6" stroke-width=".7"><path d="M72.5 60V73M77 60V69M81.5 61V68M68 63.3H84M68 66.8H84M68 70.2H76"/></g>
  <path d="M79.3 59.5H67.4V69.4A4.1 4.1 0 0 0 71.5 73.5H75.6" fill="none" stroke="#1f77ab" stroke-width="1.35"/>
  <use href="#eye" x="79.1" y="71.3"/>
  <!-- 3: ruler -->
  <g transform="translate(100.05 64.6) rotate(-45)">
    <rect x="-5" y="-3.1" width="10" height="6.2" fill="#fafafa" stroke="#fafafa" stroke-width="2"/>
    <path d="M-4.85 3.1V-3.05H4.85V3.1M-2.4 -3V-.6M0 -3V.4M2.4 -3V-.6" fill="none" stroke="#0e0e0e" stroke-width="1.4"/>
    <path d="M-4.9 3.1H4.9" stroke="#1d76ab" stroke-width="1.8"/>
  </g>
  <use href="#eye" x="105.8" y="71.4"/>
  <!-- 4: 1 2 sort -->
  <g fill="none" stroke="#d6d6d6" stroke-width="2.2" stroke-linejoin="round" opacity=".8">
    <path d="M122.1 60.7L123.6 59.1H124.9V65.3H123.1V61.5L122.1 62.1Z"/><path d="M121.4 73.7V72.3L124 69.7C124.3 69.3 124.1 68.9 123.6 68.9C123.1 68.9 122.8 69.2 122.7 69.8L121.4 69.5C121.6 68.2 122.5 67.5 123.7 67.5C125 67.5 125.8 68.3 125.8 69.4C125.8 70.3 125.3 70.9 123.9 72.3H125.9V73.7Z"/>
    <path d="M131.25 59.1H132.45V63.2H134.9L131.85 65.9L128.2 63.2H131.25Z"/>
  </g>
  <path d="M122.1 60.7L123.6 59.1H124.9V65.3H123.1V61.5L122.1 62.1Z" fill="#0d0d0d"/>
  <path d="M121.4 73.7V72.3L124 69.7C124.3 69.3 124.1 68.9 123.6 68.9C123.1 68.9 122.8 69.2 122.7 69.8L121.4 69.5C121.6 68.2 122.5 67.5 123.7 67.5C125 67.5 125.8 68.3 125.8 69.4C125.8 70.3 125.3 70.9 123.9 72.3H125.9V73.7Z" fill="#0d0d0d"/>
  <path d="M131.25 59.1H132.45V63.2H134.9L131.85 65.9L128.2 63.2H131.25Z" fill="#0d0d0d"/>
  <use href="#eye" x="132.2" y="70.9" />
  <!-- filter funnel -->
  <path d="M158.4 63.6H167.6L164.2 67.4V72.2L161.7 71.8V67.4Z" fill="#48c6d6" stroke="#2233bf" stroke-width="1.15" stroke-linejoin="round"/>
  <!-- undo / redo -->
  <use href="#undo"/>
  <g transform="translate(723.4 0) scale(-1 1)"><use href="#undo"/></g>
  <!-- configuration icon -->
  <g fill="none" stroke="#fbfbfb" stroke-width="2.8" stroke-linejoin="round">
    <rect x="595.55" y="57.5" width="1.8" height="14.9" rx=".9"/><rect x="599.6" y="57.5" width="5.8" height="5.8" rx="1.4"/><rect x="601.6" y="65.4" width="5.6" height="6" rx="1.4"/>
  </g>
  <g fill="#ececec" stroke="#262626" stroke-width="1.1">
    <path d="M597.6 60.2H599.6M597.6 61.4H599.6M597.6 68H601.6M597.6 69.4H601.6" fill="none" stroke-width=".8"/>
    <rect x="595.55" y="57.5" width="1.8" height="14.9" rx=".9"/>
    <rect x="599.6" y="57.5" width="5.8" height="5.8" rx="1.4"/><path d="M599.9 59.4H603.6V63" fill="none" stroke-width=".8"/>
    <rect x="601.6" y="65.4" width="5.6" height="6" rx="1.4"/><path d="M602 67.3H605.4V71" fill="none" stroke-width=".8"/>
  </g>
  <!-- chevrons -->
  <path d="M757.4 62.3L761.3 66.2L765.2 62.3" fill="none" stroke="#5d5d5d" stroke-width="1.05"/>
  <path d="M383.3 732.2L387 735.9L390.7 732.2" fill="none" stroke="#5d5d5d" stroke-width="1.05"/>
  <!-- traffic light button -->
  <rect x="146.8" y="722.6" width="24.8" height="24.8" fill="#f1f1f1" stroke="#9d9d9d" stroke-width="1"/>
  <rect x="155.1" y="727.2" width="8.6" height="15.6" rx="3.4" fill="#1f1f1f"/>
  <circle cx="159.4" cy="731.7" r="2.2" fill="#e03a2a"/><circle cx="159" cy="731.2" r=".8" fill="#ff9a80"/>
  <circle cx="159.4" cy="738.1" r="2.2" fill="#2aa22a"/><circle cx="159" cy="737.6" r=".8" fill="#8be070"/>
  <!-- push buttons -->
  <g fill="#fdfdfd" stroke="#d3d3d3" stroke-width="1">
    <rect x="782.9" y="124.9" width="75.3" height="24" rx="4"/><rect x="782.9" y="159.6" width="75.3" height="24.1" rx="4"/>
    <rect x="782.9" y="194.2" width="75.3" height="24.1" rx="4"/><rect x="782.9" y="229" width="75.3" height="24.2" rx="4"/>
  </g>
  <g fill="none" stroke="#c3c3c3" stroke-width="1">
    <path d="M786 148.9H855M786 183.7H855M786 218.3H855M786 253.2H855"/>
  </g>
  <rect x="783.2" y="90.8" width="74.7" height="23.5" rx="4" fill="#fff" stroke="#4690d9" stroke-width="1.5"/>
  <!-- check boxes -->
  <g fill="#f6f6f6" stroke="#6c6c6c" stroke-width="1.1">
    <rect x="16.4" y="727.9" width="12.6" height="12.6" rx="2.8"/><rect x="16.4" y="755.7" width="12.6" height="12.6" rx="2.8"/><rect x="448.8" y="726.8" width="12.6" height="12.6" rx="2.8"/>
  </g>
  <!-- resize grip -->
  <path d="M855.2 784L867.4 771.8M859 784L867.4 775.6M862.6 784L867.4 779.2" stroke="#4f4fc2" stroke-width="1.35" fill="none"/>
</svg>



<span class="t " style="left:20.30px;top:25.34px;font-size:12.3px;line-height:16px;letter-spacing:0.087px;color:#1a1a1a;">Equations, Global Variables, and Dimensions</span>
<span class="t " style="left:174.20px;top:60.82px;font-size:10.9px;line-height:14px;letter-spacing:-0.003px;color:#1a1a1a;">Filter All Fields</span>
<span class="t " style="left:625.90px;top:58.22px;font-size:10.9px;line-height:14px;letter-spacing:0.094px;color:#1a1a1a;">2023 160mtb</span>
<span class="t " style="left:812.60px;top:96.12px;font-size:10.9px;line-height:14px;letter-spacing:-0.550px;color:#111;">OK</span>
<span class="t " style="left:804.40px;top:130.02px;font-size:10.9px;line-height:14px;letter-spacing:-0.431px;color:#111;">Cancel</span>
<span class="t " style="left:799.50px;top:165.12px;font-size:10.9px;line-height:14px;letter-spacing:0.125px;color:#111;">Import...</span>
<span class="t " style="left:800.60px;top:199.72px;font-size:10.9px;line-height:14px;letter-spacing:-0.088px;color:#111;">Export...</span>
<span class="t " style="left:809.30px;top:233.82px;font-size:10.9px;line-height:14px;letter-spacing:0.133px;color:#111;">Help</span>
<span class="t " style="left:32.60px;top:727.62px;font-size:10.9px;line-height:14px;letter-spacing:0.162px;color:#1a1a1a;">Automatically rebuild</span>
<span class="t " style="left:32.80px;top:755.02px;font-size:10.9px;line-height:14px;letter-spacing:0.081px;color:#1a1a1a;">Link to external file:</span>
<span class="t " style="left:198.80px;top:726.22px;font-size:10.9px;line-height:14px;letter-spacing:0.141px;color:#1a1a1a;">Angular equation units:</span>
<span class="t " style="left:332.40px;top:728.02px;font-size:10.9px;line-height:14px;letter-spacing:-0.000px;color:#1a1a1a;">Degrees</span>
<span class="t " style="left:465.20px;top:725.82px;font-size:10.9px;line-height:14px;letter-spacing:0.240px;color:#1a1a1a;">Automatic solve order</span>
</body></html>
